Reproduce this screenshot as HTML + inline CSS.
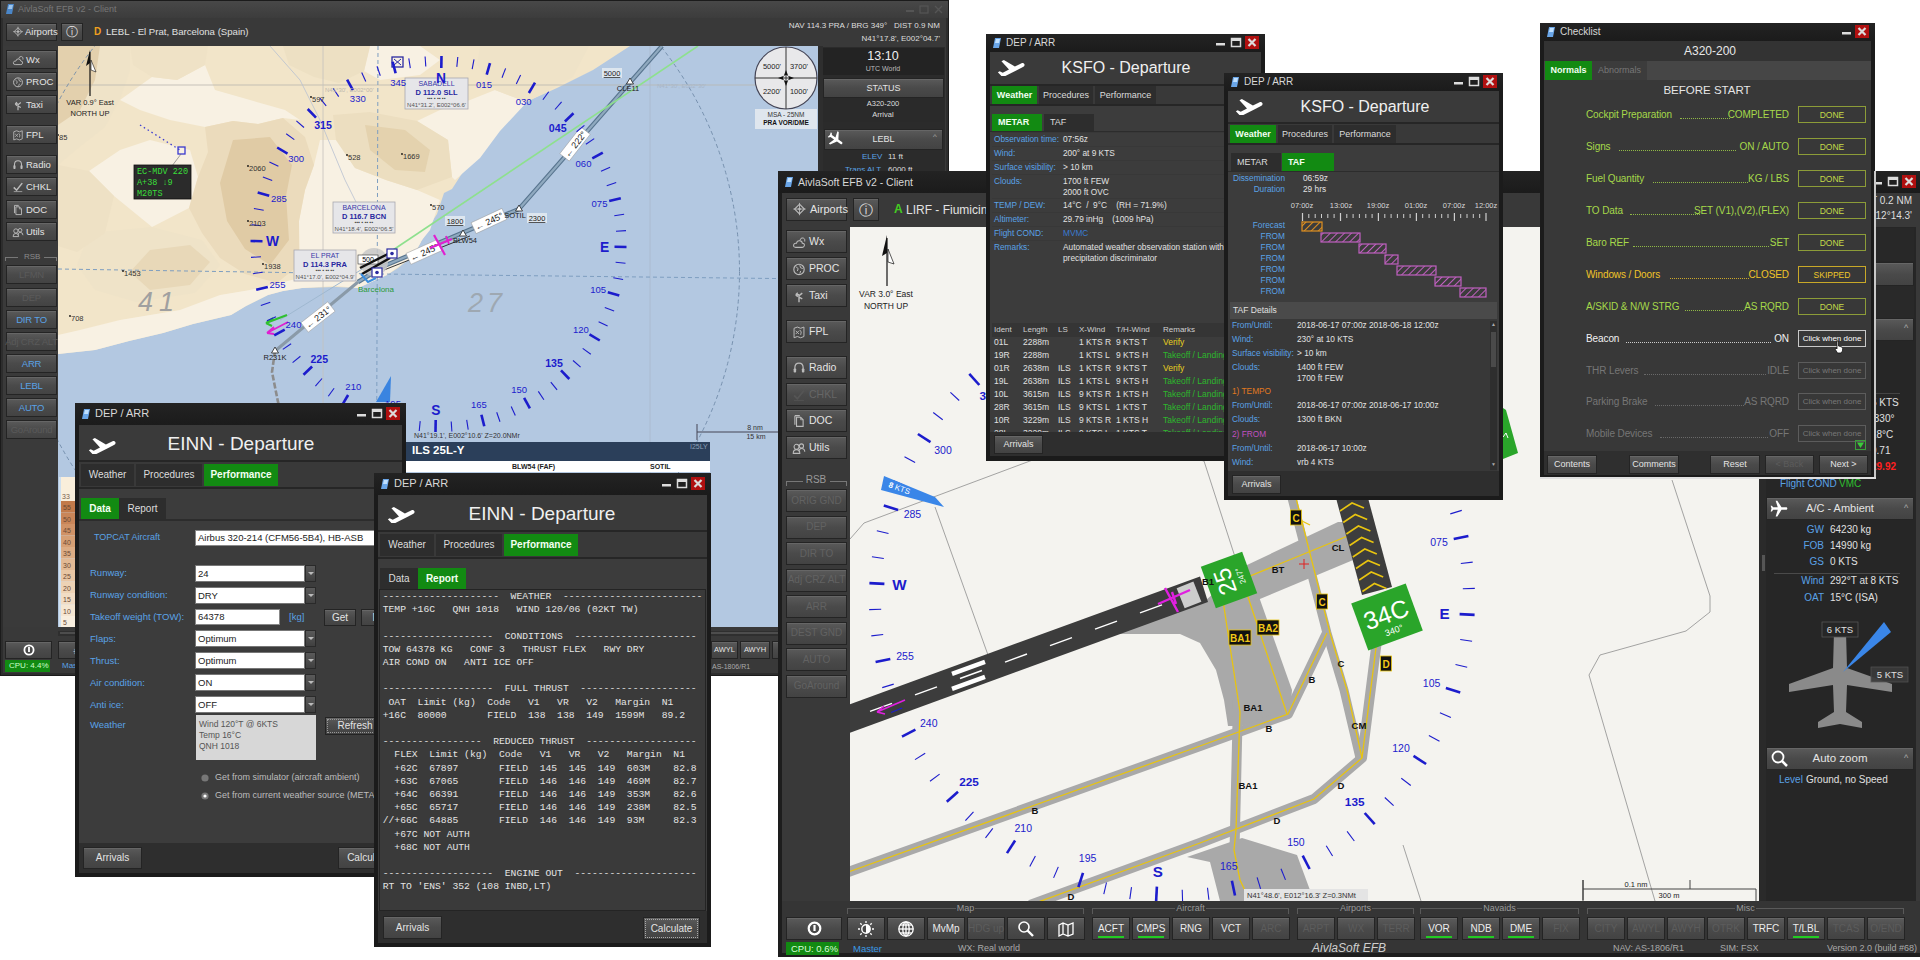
<!DOCTYPE html>
<html><head><meta charset="utf-8">
<style>
*{margin:0;padding:0;box-sizing:border-box}
html,body{width:1920px;height:960px;overflow:hidden}
body{background:#fff;position:relative;font-family:"Liberation Sans",sans-serif;color:#e6e6e6;font-size:10px}
.a{position:absolute}
.win{position:absolute;overflow:hidden}
.t{position:absolute;white-space:nowrap;line-height:1}
.btn{position:absolute;background:linear-gradient(#5a5a5a,#4a4a4a 50%,#434343);border:1px solid #242424;box-shadow:inset 0 1px 0 #666;color:#e4e4e4;font-size:10px;display:flex;align-items:center;justify-content:center;white-space:nowrap;line-height:1}
.btn.dim{color:#5a5a5a}
.btn.bl{color:#5aa2e6}
.blu{color:#5aa2e6}
.tab{position:absolute;background:#2d2d2d;color:#dcdcdc;display:flex;align-items:center;justify-content:center;font-size:10px;white-space:nowrap;line-height:1}
.tab.on{background:#128a12;color:#f2fff2;font-weight:bold}
.mono{font-family:"Liberation Mono",monospace}
.sv{position:absolute;left:0;top:0}
</style></head><body>
<div class="win" style="left:0;top:0;width:949px;height:676px;background:#2d2d2d;box-shadow:inset 0 0 0 1px #1b1b1b"><div class="a" style="left:1px;top:1px;width:947px;height:17px;background:linear-gradient(#484848,#3c3c3c);"></div><svg class="a" style="left:5px;top:3px" width="10" height="12" viewBox="0 0 10 12"><path d="M3 1 L9 1 L7 11 L1 11 Z" fill="#4a86c8"/><path d="M4 2 L8 2 L7 6 L3 6Z" fill="#9cc4ec"/></svg><div class="t" style="left:18px;top:4.5px;font-size:9px;color:#777;">AivlaSoft EFB v2 - Client</div><svg class="a" style="left:905px;top:4px" width="40" height="11"><rect x="1" y="6" width="8" height="2" fill="#555"/><rect x="15" y="2" width="8" height="7" fill="none" stroke="#555" stroke-width="1.2"/><path d="M30 2 L37 9 M37 2 L30 9" stroke="#555" stroke-width="1.4"/></svg><div class="a" style="left:3px;top:18px;width:943px;height:655px;background:#393939;"></div><div class="btn " style="left:6px;top:23px;width:51px;height:18px;font-size:9.5px;"><svg style="position:absolute;left:5px;top:50%;margin-top:-6.0px" width="12" height="12" viewBox="0 0 16 17"><path d="M8 1 L8 15 M1 8 L15 8" stroke="#bbb" stroke-width="1"/><path d="M8 2.5 L13.5 8 L8 13.5 L2.5 8 Z" fill="none" stroke="#bbb" stroke-width="1.3"/><circle cx="8" cy="8" r="1.5" fill="#bbb"/></svg><span style="position:absolute;left:18px">Airports</span></div><div class="btn " style="left:61px;top:23px;width:22px;height:18px;font-size:12px;">ⓘ</div><div class="t" style="left:94px;top:26.5px;font-size:10px;color:#f0a020;font-weight:bold;">D</div><div class="t" style="left:106px;top:27.2px;font-size:9.6px;color:#e0e0e0;">LEBL - El Prat, Barcelona (Spain)</div><div class="t" style="left:540px;width:400px;text-align:right;top:21.6px;font-size:8px;color:#dedede;">NAV 114.3 PRA / BRG 349°&nbsp;&nbsp; DIST 0.9 NM</div><div class="t" style="left:540px;width:400px;text-align:right;top:34.6px;font-size:8px;color:#dedede;">N41°17.8', E002°04.7'</div><div class="a" style="left:3px;top:46px;width:55px;height:581px;background:#3a3a3a;"></div><div class="btn " style="left:6px;top:50px;width:51px;height:19px;font-size:9.5px;justify-content:flex-start"><svg style="position:absolute;left:5px;top:50%;margin-top:-6.0px" width="12" height="12" viewBox="0 0 16 17"><path d="M4 15 Q1 15 1.5 12 Q2 9.5 5 10 Q5.5 6.5 9 7 Q12 7.5 12 10 Q15 10 14.5 13 Q14 15 12 15 Z" fill="none" stroke="#bbb" stroke-width="1.3"/><path d="M9 6.5 Q10 3 13 3.5 Q16 4.5 15 8" fill="none" stroke="#bbb" stroke-width="1.2"/></svg><span style="position:absolute;left:19px">Wx</span></div><div class="btn " style="left:6px;top:72px;width:51px;height:19px;font-size:9.5px;justify-content:flex-start"><svg style="position:absolute;left:5px;top:50%;margin-top:-6.0px" width="12" height="12" viewBox="0 0 16 17"><circle cx="8" cy="9" r="6.3" fill="none" stroke="#bbb" stroke-width="1.4"/><path d="M4.5 6 L7 8 L6 11 M9 4 L10 7 L12.5 8 M9 14 L10 11" fill="none" stroke="#bbb" stroke-width="1.2"/></svg><span style="position:absolute;left:19px">PROC</span></div><div class="btn " style="left:6px;top:95px;width:51px;height:19px;font-size:9.5px;justify-content:flex-start"><svg style="position:absolute;left:5px;top:50%;margin-top:-6.0px" width="12" height="12" viewBox="0 0 16 17"><path d="M8 16 L8 7 M8 7 L4 7 M4 7 L6.5 4.5 M4 7 L6.5 9.5 M8 8 L12 5 M8 10 L12 12" fill="none" stroke="#bbb" stroke-width="1.7"/></svg><span style="position:absolute;left:19px">Taxi</span></div><div class="btn " style="left:6px;top:125px;width:51px;height:19px;font-size:9.5px;justify-content:flex-start"><svg style="position:absolute;left:5px;top:50%;margin-top:-6.0px" width="12" height="12" viewBox="0 0 16 17"><path d="M2 4 L6 2.5 L10 4 L14 2.5 L14 14 L10 15.5 L6 14 L2 15.5 Z" fill="none" stroke="#bbb" stroke-width="1.2"/><path d="M4 7 L8 11 M8 7 L4 11 M9 6 Q12 8 10 12" fill="none" stroke="#bbb" stroke-width="1.1"/></svg><span style="position:absolute;left:19px">FPL</span></div><div class="btn " style="left:6px;top:155px;width:51px;height:19px;font-size:9.5px;justify-content:flex-start"><svg style="position:absolute;left:5px;top:50%;margin-top:-6.0px" width="12" height="12" viewBox="0 0 16 17"><path d="M3 11 L3 8 Q3 2.5 8 2.5 Q13 2.5 13 8 L13 11" fill="none" stroke="#bbb" stroke-width="1.5"/><rect x="1.5" y="9" width="3" height="5" rx="1" fill="#bbb"/><rect x="11.5" y="9" width="3" height="5" rx="1" fill="#bbb"/></svg><span style="position:absolute;left:19px">Radio</span></div><div class="btn " style="left:6px;top:177px;width:51px;height:19px;font-size:9.5px;justify-content:flex-start"><svg style="position:absolute;left:5px;top:50%;margin-top:-6.0px" width="12" height="12" viewBox="0 0 16 17"><path d="M2 9 L6 13 L14 3" fill="none" stroke="#bbb" stroke-width="2.2"/><path d="M2 15 L14 15" stroke="#bbb" stroke-width="1"/></svg><span style="position:absolute;left:19px">CHKL</span></div><div class="btn " style="left:6px;top:200px;width:51px;height:19px;font-size:9.5px;justify-content:flex-start"><svg style="position:absolute;left:5px;top:50%;margin-top:-6.0px" width="12" height="12" viewBox="0 0 16 17"><path d="M5 4 L10 4 L13 7 L13 15 L5 15 Z M3 2 L9 2 M3 2 L3 13" fill="none" stroke="#bbb" stroke-width="1.3"/><path d="M10 4 L10 7 L13 7" fill="none" stroke="#bbb" stroke-width="1"/></svg><span style="position:absolute;left:19px">DOC</span></div><div class="btn " style="left:6px;top:222px;width:51px;height:19px;font-size:9.5px;justify-content:flex-start"><svg style="position:absolute;left:5px;top:50%;margin-top:-6.0px" width="12" height="12" viewBox="0 0 16 17"><circle cx="5" cy="7" r="3" fill="none" stroke="#bbb" stroke-width="1.3"/><circle cx="11" cy="6" r="2.5" fill="none" stroke="#bbb" stroke-width="1.3"/><path d="M1 15 Q1 10.5 5 10.5 Q9 10.5 9 15 Z M8 13 Q8 9 11 9 Q15 9 15 13" fill="none" stroke="#bbb" stroke-width="1.3"/></svg><span style="position:absolute;left:19px">Utils</span></div><div class="btn dim" style="left:6px;top:265px;width:51px;height:19px;font-size:9.5px;letter-spacing:-0.2px">LFMN</div><div class="btn dim" style="left:6px;top:288px;width:51px;height:19px;font-size:9.5px;letter-spacing:-0.2px">DEP</div><div class="btn bl" style="left:6px;top:310px;width:51px;height:19px;font-size:9.5px;letter-spacing:-0.2px">DIR TO</div><div class="btn dim" style="left:6px;top:332px;width:51px;height:19px;font-size:9.5px;letter-spacing:-0.2px">Adj CRZ ALT</div><div class="btn bl" style="left:6px;top:354px;width:51px;height:19px;font-size:9.5px;letter-spacing:-0.2px">ARR</div><div class="btn bl" style="left:6px;top:376px;width:51px;height:19px;font-size:9.5px;letter-spacing:-0.2px">LEBL</div><div class="btn bl" style="left:6px;top:398px;width:51px;height:19px;font-size:9.5px;letter-spacing:-0.2px">AUTO</div><div class="btn dim" style="left:6px;top:420px;width:51px;height:19px;font-size:9.5px;letter-spacing:-0.2px">GoAround</div><div class="a" style="left:5px;top:257px;width:13px;height:1px;background:#777;"></div><div class="a" style="left:5px;top:257px;width:1px;height:4px;background:#777;"></div><div class="a" style="left:44px;top:257px;width:13px;height:1px;background:#777;"></div><div class="a" style="left:56px;top:257px;width:1px;height:4px;background:#777;"></div><div class="t" style="left:24px;top:252.6px;font-size:8px;color:#8a8a8a;">RSB</div><svg class="sv" style="left:58px;top:46px" width="760" height="581" viewBox="58 46 760 581" font-family="Liberation Sans, sans-serif"><rect x="58" y="46" width="760" height="581" fill="#b3c8e1"/><polygon points="58,46 58,354 95,350 129,341 163,333 193,324 231,315 246,306 268,295 283,291 302,288 336,287 358,288 387,275 398,268 413,256 421,242 430,225 437,214 444,193 452,189 461,175 471,160 493,131 517,106 557,88 593,70 630,46 58,46" fill="#f2e5c9"/><polygon points="58,165 58,46 62,46 58,60" fill="#f8f1e3"/><polygon points="152,77 177,80 205,65 215,90 250,100 285,110 300,120 283,118 258,124 233,121 205,127 170,120 140,110 120,100" fill="#f8f1e3"/><polygon points="336,140 355,168 386,180 417,190 440,200 430,230 410,255 380,262 350,270 320,270 300,265 299,221 305,190 314,165 320,140" fill="#f8f1e3"/><polygon points="452,177 448,140 417,121 440,110 470,100 495,90 527,102 500,131 480,158 455,180" fill="#f8f1e3"/><polygon points="58,354 95,350 129,341 163,333 193,324 231,315 246,306 268,295 283,291 302,288 336,286 358,288 387,275 413,256 421,242 390,250 330,270 300,278 250,290 220,295 180,310 120,320 80,330 58,335" fill="#f8f1e3"/><polygon points="89,171 120,150 150,140 190,150 198,177 189,208 152,227 114,196" fill="#f8f1e3"/><polygon points="370,46 420,46 440,60 420,75 380,80 364,71" fill="#f8f1e3"/><polygon points="58,46 130,46 130,71 120,99 105,127 77,149 58,165" fill="#efe3c8"/><polygon points="58,46 100,46 95,80 80,110 58,125" fill="#e3d0ad"/><polygon points="130,46 208,46 205,65 177,80 152,77 133,65" fill="#efe2c6"/><polygon points="205,127 233,121 258,124 283,118 305,137 314,165 305,190 299,221 299,265 277,283 245,274 220,258 202,233 189,208 198,177 208,152" fill="#ebdbbc"/><polygon points="233,140 270,137 292,165 286,196 289,240 270,265 245,249 227,221 220,183" fill="#e0cba5"/><polygon points="283,46 370,46 364,71 339,83 314,77 289,65" fill="#ede0c3"/><polygon points="333,115 370,112 417,121 448,140 452,177 417,190 386,180 355,168 336,140" fill="#ecdec0"/><polygon points="365,125 405,130 430,150 425,172 395,170 370,150" fill="#e4d2ae"/><polygon points="480,46 589,46 573,77 527,102 495,90 477,65" fill="#efe3c8"/><polygon points="89,233 152,227 202,240 220,265 195,293 136,302 95,290 77,265" fill="#efe3c8"/><polygon points="58,165 89,171 114,196 105,233 77,252 58,246" fill="#eee1c5"/><polygon points="150,250 190,245 210,262 190,285 150,290 130,272" fill="#e8d8b8"/><line x1="58" y1="85" x2="818" y2="85" stroke="#b9b6ae" stroke-width="0.8"/><line x1="323" y1="46" x2="323" y2="627" stroke="#c4c2bc" stroke-width="0.8"/><line x1="650" y1="46" x2="650" y2="627" stroke="#a9b8cc" stroke-width="0.8"/><line x1="58" y1="269" x2="380" y2="274" stroke="#7e9ec0" stroke-width="1" stroke-dasharray="4,3"/><line x1="380" y1="274" x2="818" y2="279" stroke="#7e9ec0" stroke-width="1" stroke-dasharray="4,3"/><line x1="378" y1="46" x2="376" y2="627" stroke="#7e9ec0" stroke-width="1" stroke-dasharray="4,3"/><circle cx="377.7" cy="271.6" r="361.8" fill="none" stroke="#6f8aa8" stroke-width="0.9" stroke-dasharray="4,3"/><polyline points="270,46 300,80 320,120 345,180 370,230" fill="none" stroke="#b8c0d0" stroke-width="0.8"/><polyline points="662,46 519,209 384,266 358,282" fill="none" stroke="#58758f" stroke-width="4.5"/><polyline points="662,46 519,209 384,266 358,282" fill="none" stroke="#8fa9bf" stroke-width="2.2"/><polyline points="358,282 275,351" fill="none" stroke="#8a9aa8" stroke-width="3"/><polyline points="275,351 272,372 278,402 290,440" fill="none" stroke="#8c8c8c" stroke-width="2.6" stroke-dasharray="6,2"/><line x1="384" y1="270" x2="470" y2="236" stroke="#222" stroke-width="0.9"/><line x1="698" y1="46" x2="393" y2="250" stroke="#8ee08e" stroke-width="1.6"/><line x1="393" y1="250" x2="280" y2="320" stroke="#9fb8d0" stroke-width="1"/><circle cx="374" cy="262" r="14" fill="#c8c8c8" opacity="0.85"/><rect x="358" y="255" width="20" height="9" fill="#fff" stroke="#333" stroke-width="0.6"/><text x="368" y="262" font-size="7" fill="#000" text-anchor="middle">500</text><line x1="360" y1="268" x2="388" y2="254" stroke="#111" stroke-width="2.5"/><line x1="362" y1="274" x2="390" y2="258" stroke="#111" stroke-width="2.5"/><rect x="387" y="249" width="10" height="9" fill="#fff" stroke="#2a2aa0" stroke-width="1.2"/><circle cx="392" cy="253.5" r="1.8" fill="#2a2aa0"/><rect x="372" y="268" width="10" height="9" fill="#fff" stroke="#2a2aa0" stroke-width="1.2"/><circle cx="377" cy="272.5" r="1.8" fill="#2a2aa0"/><path d="M361 274 L368 282 L376 278" fill="none" stroke="#3a8ee0" stroke-width="2"/><text x="376" y="292" font-size="8" fill="#2a9a3a" text-anchor="middle">Barcelona</text><g transform="translate(575,144) rotate(-52)"><rect x="-17.0" y="-6" width="34" height="12" fill="#fff" stroke="#999" stroke-width="0.5"/><text x="0" y="3.5" font-size="9" fill="#222" text-anchor="middle">← 222°</text></g><g transform="translate(489,221) rotate(-25)"><rect x="-17.0" y="-6" width="34" height="12" fill="#fff" stroke="#999" stroke-width="0.5"/><text x="0" y="3.5" font-size="9" fill="#222" text-anchor="middle">← 245°</text></g><g transform="translate(424,252) rotate(-24)"><rect x="-17.0" y="-6" width="34" height="12" fill="#fff" stroke="#999" stroke-width="0.5"/><text x="0" y="3.5" font-size="9" fill="#222" text-anchor="middle">← 245°</text></g><g transform="translate(318,317) rotate(-38)"><rect x="-17.0" y="-6" width="34" height="12" fill="#fff" stroke="#999" stroke-width="0.5"/><text x="0" y="3.5" font-size="9" fill="#222" text-anchor="middle">← 231°</text></g><line x1="434" y1="235" x2="445" y2="255" stroke="#e020d0" stroke-width="2.2"/><line x1="430" y1="248" x2="452" y2="239" stroke="#e020d0" stroke-width="2.2"/><line x1="446" y1="236" x2="449" y2="244" stroke="#e020d0" stroke-width="2"/><path d="M630 78 L633.5 84 L626.5 84 Z" fill="#fff" stroke="#222" stroke-width="0.8"/><text x="628" y="91" font-size="7.5" fill="#222" text-anchor="middle">CLE11</text><path d="M519 205 L522.5 211 L515.5 211 Z" fill="#fff" stroke="#222" stroke-width="0.8"/><text x="515" y="218" font-size="7.5" fill="#222" text-anchor="middle">SOTIL</text><path d="M463 230 L466.5 236 L459.5 236 Z" fill="#fff" stroke="#222" stroke-width="0.8"/><text x="465" y="243" font-size="7.5" fill="#222" text-anchor="middle">BLW54</text><path d="M275 347 L278.5 353 L271.5 353 Z" fill="#fff" stroke="#222" stroke-width="0.8"/><text x="275" y="360" font-size="7.5" fill="#222" text-anchor="middle">R231K</text><rect x="602" y="68" width="20" height="10" fill="#dde6ef"/><text x="612" y="76" font-size="7.5" fill="#222" text-anchor="middle" text-decoration="underline">5000</text><rect x="527" y="213" width="20" height="10" fill="#dde6ef"/><text x="537" y="221" font-size="7.5" fill="#222" text-anchor="middle" text-decoration="underline">2300</text><rect x="445" y="216" width="20" height="10" fill="#dde6ef"/><text x="455" y="224" font-size="7.5" fill="#222" text-anchor="middle" text-decoration="underline">1800</text><path d="M287 315 L266 323 M266 323 L273 318 M266 323 L272 326" stroke="#30c030" stroke-width="2" fill="none"/><path d="M288 322 L267 333 M267 333 L274 327 M267 333 L274 334" stroke="#e020d0" stroke-width="1.8" fill="none"/><path d="M391 376 L376 402 L390 402 Z" fill="#3a84e0"/><rect x="405" y="78" width="63" height="31" fill="#e6e6e9" stroke="#a8a8b0" stroke-width="0.8"/><text x="436.5" y="86" font-size="7" fill="#3838a8" text-anchor="middle">SABADELL</text><text x="436.5" y="95" font-size="7.5" font-weight="bold" fill="#2828a0" text-anchor="middle">D 112.0 SLL</text><text x="436.5" y="100" font-size="5" fill="#444" text-anchor="middle">▪▪▪  ▪ ▪▪  ▪▪</text><text x="436.5" y="107" font-size="6" fill="#555" text-anchor="middle">N41°31.2', E002°06.6'</text><rect x="333" y="202" width="62" height="31" fill="#e6e6e9" stroke="#a8a8b0" stroke-width="0.8"/><text x="364.0" y="210" font-size="7" fill="#3838a8" text-anchor="middle">BARCELONA</text><text x="364.0" y="219" font-size="7.5" font-weight="bold" fill="#2828a0" text-anchor="middle">D 116.7 BCN</text><text x="364.0" y="224" font-size="5" fill="#444" text-anchor="middle">▪▪▪  ▪ ▪▪  ▪▪</text><text x="364.0" y="231" font-size="6" fill="#555" text-anchor="middle">N41°18.4', E002°06.5'</text><rect x="294" y="250" width="62" height="31" fill="#e6e6e9" stroke="#a8a8b0" stroke-width="0.8"/><text x="325.0" y="258" font-size="7" fill="#3838a8" text-anchor="middle">EL PRAT</text><text x="325.0" y="267" font-size="7.5" font-weight="bold" fill="#2828a0" text-anchor="middle">D 114.3 PRA</text><text x="325.0" y="272" font-size="5" fill="#444" text-anchor="middle">▪▪▪  ▪ ▪▪  ▪▪</text><text x="325.0" y="279" font-size="6" fill="#555" text-anchor="middle">N41°17.0', E002°04.9'</text><rect x="392" y="57" width="11" height="10" fill="none" stroke="#2a2aa0" stroke-width="1.3"/><path d="M394 59 L401 65 M401 59 L394 65" stroke="#2a2aa0" stroke-width="1"/><line x1="441.3" y1="68.0" x2="441.5" y2="56.0" stroke="#1c1ccc" stroke-width="2.6"/><text x="441.1" y="83.0" font-size="13.8" font-weight="bold" fill="#1c1ccc" text-anchor="middle">N</text><line x1="456.8" y1="66.9" x2="457.8" y2="57.0" stroke="#1c1ccc" stroke-width="1.1"/><line x1="472.2" y1="69.2" x2="474.0" y2="59.4" stroke="#1c1ccc" stroke-width="1.1"/><line x1="486.7" y1="74.7" x2="490.0" y2="63.2" stroke="#1c1ccc" stroke-width="2.6"/><text x="484.0" y="87.8" font-size="9.5" font-weight="normal" fill="#1c1ccc" text-anchor="middle">015</text><line x1="502.0" y1="77.7" x2="505.6" y2="68.4" stroke="#1c1ccc" stroke-width="1.1"/><line x1="516.3" y1="83.9" x2="520.6" y2="74.9" stroke="#1c1ccc" stroke-width="1.1"/><line x1="528.9" y1="93.0" x2="535.0" y2="82.7" stroke="#1c1ccc" stroke-width="2.6"/><text x="523.7" y="105.0" font-size="9.5" font-weight="normal" fill="#1c1ccc" text-anchor="middle">030</text><line x1="542.9" y1="99.8" x2="548.7" y2="91.7" stroke="#1c1ccc" stroke-width="1.1"/><line x1="555.0" y1="109.5" x2="561.6" y2="101.9" stroke="#1c1ccc" stroke-width="1.1"/><line x1="564.9" y1="121.5" x2="573.5" y2="113.2" stroke="#1c1ccc" stroke-width="2.6"/><text x="557.7" y="132.3" font-size="10.6" font-weight="bold" fill="#1c1ccc" text-anchor="middle">045</text><line x1="576.6" y1="131.7" x2="584.4" y2="125.4" stroke="#1c1ccc" stroke-width="1.1"/><line x1="585.9" y1="144.2" x2="594.2" y2="138.6" stroke="#1c1ccc" stroke-width="1.1"/><line x1="592.3" y1="158.4" x2="602.8" y2="152.6" stroke="#1c1ccc" stroke-width="2.6"/><text x="583.5" y="166.7" font-size="9.5" font-weight="normal" fill="#1c1ccc" text-anchor="middle">060</text><line x1="601.0" y1="171.3" x2="610.1" y2="167.2" stroke="#1c1ccc" stroke-width="1.1"/><line x1="606.7" y1="185.8" x2="616.2" y2="182.5" stroke="#1c1ccc" stroke-width="1.1"/><line x1="609.2" y1="201.1" x2="620.8" y2="198.2" stroke="#1c1ccc" stroke-width="2.6"/><text x="599.5" y="207.0" font-size="9.5" font-weight="normal" fill="#1c1ccc" text-anchor="middle">075</text><line x1="614.3" y1="215.8" x2="624.1" y2="214.3" stroke="#1c1ccc" stroke-width="1.1"/><line x1="616.0" y1="231.3" x2="626.0" y2="230.6" stroke="#1c1ccc" stroke-width="1.1"/><line x1="614.5" y1="246.8" x2="626.5" y2="247.0" stroke="#1c1ccc" stroke-width="2.6"/><text x="604.5" y="251.6" font-size="13.8" font-weight="bold" fill="#1c1ccc" text-anchor="middle">E</text><line x1="615.6" y1="262.3" x2="625.5" y2="263.3" stroke="#1c1ccc" stroke-width="1.1"/><line x1="613.3" y1="277.7" x2="623.1" y2="279.5" stroke="#1c1ccc" stroke-width="1.1"/><line x1="607.8" y1="292.2" x2="619.3" y2="295.5" stroke="#1c1ccc" stroke-width="2.6"/><text x="598.1" y="292.9" font-size="9.5" font-weight="normal" fill="#1c1ccc" text-anchor="middle">105</text><line x1="604.8" y1="307.5" x2="614.1" y2="311.1" stroke="#1c1ccc" stroke-width="1.1"/><line x1="598.6" y1="321.8" x2="607.6" y2="326.1" stroke="#1c1ccc" stroke-width="1.1"/><line x1="589.5" y1="334.4" x2="599.8" y2="340.5" stroke="#1c1ccc" stroke-width="2.6"/><text x="580.9" y="332.7" font-size="9.5" font-weight="normal" fill="#1c1ccc" text-anchor="middle">120</text><line x1="582.7" y1="348.4" x2="590.8" y2="354.2" stroke="#1c1ccc" stroke-width="1.1"/><line x1="573.0" y1="360.5" x2="580.6" y2="367.1" stroke="#1c1ccc" stroke-width="1.1"/><line x1="561.0" y1="370.4" x2="569.3" y2="379.0" stroke="#1c1ccc" stroke-width="2.6"/><text x="554.0" y="367.0" font-size="10.6" font-weight="bold" fill="#1c1ccc" text-anchor="middle">135</text><line x1="550.8" y1="382.1" x2="557.1" y2="389.9" stroke="#1c1ccc" stroke-width="1.1"/><line x1="538.3" y1="391.4" x2="543.9" y2="399.7" stroke="#1c1ccc" stroke-width="1.1"/><line x1="524.1" y1="397.8" x2="529.9" y2="408.3" stroke="#1c1ccc" stroke-width="2.6"/><text x="519.2" y="392.5" font-size="9.5" font-weight="normal" fill="#1c1ccc" text-anchor="middle">150</text><line x1="511.2" y1="406.5" x2="515.3" y2="415.6" stroke="#1c1ccc" stroke-width="1.1"/><line x1="496.7" y1="412.2" x2="500.0" y2="421.7" stroke="#1c1ccc" stroke-width="1.1"/><line x1="481.4" y1="414.7" x2="484.3" y2="426.3" stroke="#1c1ccc" stroke-width="2.6"/><text x="478.9" y="408.4" font-size="9.5" font-weight="normal" fill="#1c1ccc" text-anchor="middle">165</text><line x1="466.7" y1="419.8" x2="468.2" y2="429.6" stroke="#1c1ccc" stroke-width="1.1"/><line x1="451.2" y1="421.5" x2="451.9" y2="431.5" stroke="#1c1ccc" stroke-width="1.1"/><line x1="435.7" y1="420.0" x2="435.5" y2="432.0" stroke="#1c1ccc" stroke-width="2.6"/><text x="435.9" y="414.9" font-size="13.8" font-weight="bold" fill="#1c1ccc" text-anchor="middle">S</text><line x1="420.2" y1="421.1" x2="419.2" y2="431.0" stroke="#1c1ccc" stroke-width="1.1"/><line x1="404.8" y1="418.8" x2="403.0" y2="428.6" stroke="#1c1ccc" stroke-width="1.1"/><line x1="390.3" y1="413.3" x2="387.0" y2="424.8" stroke="#1c1ccc" stroke-width="2.6"/><text x="393.0" y="407.1" font-size="9.5" font-weight="normal" fill="#1c1ccc" text-anchor="middle">195</text><line x1="375.0" y1="410.3" x2="371.4" y2="419.6" stroke="#1c1ccc" stroke-width="1.1"/><line x1="360.7" y1="404.1" x2="356.4" y2="413.1" stroke="#1c1ccc" stroke-width="1.1"/><line x1="348.1" y1="395.0" x2="342.0" y2="405.3" stroke="#1c1ccc" stroke-width="2.6"/><text x="353.3" y="389.9" font-size="9.5" font-weight="normal" fill="#1c1ccc" text-anchor="middle">210</text><line x1="334.1" y1="388.2" x2="328.3" y2="396.3" stroke="#1c1ccc" stroke-width="1.1"/><line x1="322.0" y1="378.5" x2="315.4" y2="386.1" stroke="#1c1ccc" stroke-width="1.1"/><line x1="312.1" y1="366.5" x2="303.5" y2="374.8" stroke="#1c1ccc" stroke-width="2.6"/><text x="319.3" y="363.4" font-size="10.6" font-weight="bold" fill="#1c1ccc" text-anchor="middle">225</text><line x1="300.4" y1="356.3" x2="292.6" y2="362.6" stroke="#1c1ccc" stroke-width="1.1"/><line x1="291.1" y1="343.8" x2="282.8" y2="349.4" stroke="#1c1ccc" stroke-width="1.1"/><line x1="284.7" y1="329.6" x2="274.2" y2="335.4" stroke="#1c1ccc" stroke-width="2.6"/><text x="293.5" y="328.2" font-size="9.5" font-weight="normal" fill="#1c1ccc" text-anchor="middle">240</text><line x1="276.0" y1="316.7" x2="266.9" y2="320.8" stroke="#1c1ccc" stroke-width="1.1"/><line x1="270.3" y1="302.2" x2="260.8" y2="305.5" stroke="#1c1ccc" stroke-width="1.1"/><line x1="267.8" y1="286.9" x2="256.2" y2="289.8" stroke="#1c1ccc" stroke-width="2.6"/><text x="277.5" y="287.9" font-size="9.5" font-weight="normal" fill="#1c1ccc" text-anchor="middle">255</text><line x1="262.7" y1="272.2" x2="252.9" y2="273.7" stroke="#1c1ccc" stroke-width="1.1"/><line x1="261.0" y1="256.7" x2="251.0" y2="257.4" stroke="#1c1ccc" stroke-width="1.1"/><line x1="262.5" y1="241.2" x2="250.5" y2="241.0" stroke="#1c1ccc" stroke-width="2.6"/><text x="272.5" y="246.4" font-size="13.8" font-weight="bold" fill="#1c1ccc" text-anchor="middle">W</text><line x1="261.4" y1="225.7" x2="251.5" y2="224.7" stroke="#1c1ccc" stroke-width="1.1"/><line x1="263.7" y1="210.3" x2="253.9" y2="208.5" stroke="#1c1ccc" stroke-width="1.1"/><line x1="269.2" y1="195.8" x2="257.7" y2="192.5" stroke="#1c1ccc" stroke-width="2.6"/><text x="278.9" y="201.9" font-size="9.5" font-weight="normal" fill="#1c1ccc" text-anchor="middle">285</text><line x1="272.2" y1="180.5" x2="262.9" y2="176.9" stroke="#1c1ccc" stroke-width="1.1"/><line x1="278.4" y1="166.2" x2="269.4" y2="161.9" stroke="#1c1ccc" stroke-width="1.1"/><line x1="287.5" y1="153.6" x2="277.2" y2="147.5" stroke="#1c1ccc" stroke-width="2.6"/><text x="296.1" y="162.2" font-size="9.5" font-weight="normal" fill="#1c1ccc" text-anchor="middle">300</text><line x1="294.3" y1="139.6" x2="286.2" y2="133.8" stroke="#1c1ccc" stroke-width="1.1"/><line x1="304.0" y1="127.5" x2="296.4" y2="120.9" stroke="#1c1ccc" stroke-width="1.1"/><line x1="316.0" y1="117.6" x2="307.7" y2="109.0" stroke="#1c1ccc" stroke-width="2.6"/><text x="323.0" y="128.6" font-size="10.6" font-weight="bold" fill="#1c1ccc" text-anchor="middle">315</text><line x1="326.2" y1="105.9" x2="319.9" y2="98.1" stroke="#1c1ccc" stroke-width="1.1"/><line x1="338.7" y1="96.6" x2="333.1" y2="88.3" stroke="#1c1ccc" stroke-width="1.1"/><line x1="352.9" y1="90.2" x2="347.1" y2="79.7" stroke="#1c1ccc" stroke-width="2.6"/><text x="357.8" y="102.4" font-size="9.5" font-weight="normal" fill="#1c1ccc" text-anchor="middle">330</text><line x1="365.8" y1="81.5" x2="361.7" y2="72.4" stroke="#1c1ccc" stroke-width="1.1"/><line x1="380.3" y1="75.8" x2="377.0" y2="66.3" stroke="#1c1ccc" stroke-width="1.1"/><line x1="395.6" y1="73.3" x2="392.7" y2="61.7" stroke="#1c1ccc" stroke-width="2.6"/><text x="398.1" y="86.4" font-size="9.5" font-weight="normal" fill="#1c1ccc" text-anchor="middle">345</text><line x1="410.3" y1="68.2" x2="408.8" y2="58.4" stroke="#1c1ccc" stroke-width="1.1"/><line x1="425.8" y1="66.5" x2="425.1" y2="56.5" stroke="#1c1ccc" stroke-width="1.1"/><circle cx="311" cy="97" r="0.9" fill="#111"/><text x="312" y="102" font-size="7.5" fill="#333">597</text><circle cx="347" cy="155" r="0.9" fill="#111"/><text x="348" y="160" font-size="7.5" fill="#333">528</text><circle cx="402" cy="154" r="0.9" fill="#111"/><text x="403" y="159" font-size="7.5" fill="#333">1669</text><circle cx="248" cy="166" r="0.9" fill="#111"/><text x="249" y="171" font-size="7.5" fill="#333">2060</text><circle cx="248" cy="221" r="0.9" fill="#111"/><text x="249" y="226" font-size="7.5" fill="#333">2103</text><circle cx="263" cy="264" r="0.9" fill="#111"/><text x="264" y="269" font-size="7.5" fill="#333">1938</text><circle cx="123" cy="271" r="0.9" fill="#111"/><text x="124" y="276" font-size="7.5" fill="#333">1453</text><circle cx="70" cy="316" r="0.9" fill="#111"/><text x="71" y="321" font-size="7.5" fill="#333">708</text><circle cx="431" cy="205" r="0.9" fill="#111"/><text x="432" y="210" font-size="7.5" fill="#333">570</text><circle cx="58" cy="135" r="0.9" fill="#111"/><text x="59" y="140" font-size="7.5" fill="#333">85</text><text x="138" y="311" font-size="27" fill="#a0a0a0" font-style="italic" letter-spacing="6">41</text><text x="468" y="312" font-size="27" fill="#9ea8b2" font-style="italic" letter-spacing="4">27</text><line x1="90" y1="52" x2="90" y2="96" stroke="#111" stroke-width="1.2"/><path d="M90 50 L86 66 L90 63 Z" fill="#111"/><path d="M91 60 L96 72 L91 70 Z" fill="#fff" stroke="#111" stroke-width="0.6"/><text x="90" y="105" font-size="7.5" fill="#222" text-anchor="middle">VAR 0.9° East</text><text x="90" y="116" font-size="7.5" fill="#222" text-anchor="middle">NORTH UP</text><polyline points="140,125 180,150" stroke="#3a3ad0" stroke-width="1.3" stroke-dasharray="1.5,3" fill="none"/><rect x="178" y="147" width="7" height="7" fill="none" stroke="#3a3ad0" stroke-width="1.3"/><line x1="181" y1="154" x2="172" y2="166" stroke="#666" stroke-width="0.6"/><rect x="134" y="165" width="57" height="34" fill="#2b2b2b" stroke="#111" stroke-width="0.8"/><text x="137" y="174" font-size="8.5" fill="#3adf3a" font-family="Liberation Mono, monospace">EC-MDV 220</text><text x="137" y="185" font-size="8.5" fill="#3adf3a" font-family="Liberation Mono, monospace">A+38 ↓9</text><text x="137" y="196" font-size="8.5" fill="#3adf3a" font-family="Liberation Mono, monospace">M20TS</text><text x="414" y="438" font-size="7" fill="#333">N41°19.1', E002°10.6' Z=20.0NMr</text><text x="325" y="92" font-size="6" fill="#bdb8ae">N41°30', E002°00'</text><text x="657" y="88" font-size="6" fill="#a8b6c8">N41°30', E002°30'</text><rect x="755" y="109" width="62" height="20" fill="#dfe6ee"/><circle cx="786" cy="78" r="31" fill="#e8e8ea" stroke="#445" stroke-width="1.2"/><line x1="755" y1="78" x2="817" y2="78" stroke="#333" stroke-width="1"/><line x1="786" y1="47" x2="786" y2="109" stroke="#333" stroke-width="1"/><path d="M786 70 L783 78 L786 86 L789 78 Z M778 78 L786 75 L794 78 L786 81 Z" fill="#111"/><text x="772" y="69" font-size="7.5" fill="#222" text-anchor="middle">5000'</text><text x="799" y="69" font-size="7.5" fill="#222" text-anchor="middle">3700'</text><text x="772" y="94" font-size="7.5" fill="#222" text-anchor="middle">2200'</text><text x="799" y="94" font-size="7.5" fill="#222" text-anchor="middle">1000'</text><text x="786" y="117" font-size="6.5" fill="#333" text-anchor="middle">MSA - 25NM</text><text x="786" y="125" font-size="6.5" font-weight="bold" fill="#111" text-anchor="middle">PRA VOR/DME</text><line x1="697" y1="424" x2="697" y2="440" stroke="#445" stroke-width="1"/><line x1="697" y1="432" x2="818" y2="432" stroke="#445" stroke-width="1"/><text x="755" y="430" font-size="7" fill="#333" text-anchor="middle">8 nm</text><text x="756" y="439" font-size="7" fill="#333" text-anchor="middle">15 km</text><rect x="59" y="477" width="17" height="150" fill="#cfe0f0"/><rect x="61" y="477" width="15" height="24" fill="#f9eedb"/><text x="62" y="499" font-size="7" fill="#7a6050">33</text><rect x="61" y="501" width="15" height="11.5" fill="#c27a4a"/><text x="63" y="510" font-size="7" fill="#6b4a35">55</text><rect x="61" y="512.5" width="15" height="11.5" fill="#c98558"/><text x="63" y="521.5" font-size="7" fill="#6b4a35">50</text><rect x="61" y="524.0" width="15" height="11.5" fill="#d09266"/><text x="63" y="533.0" font-size="7" fill="#6b4a35">45</text><rect x="61" y="535.5" width="15" height="11.5" fill="#d69f74"/><text x="63" y="544.5" font-size="7" fill="#6b4a35">40</text><rect x="61" y="547.0" width="15" height="11.5" fill="#dcac84"/><text x="63" y="556.0" font-size="7" fill="#6b4a35">35</text><rect x="61" y="558.5" width="15" height="11.5" fill="#e2b994"/><text x="63" y="567.5" font-size="7" fill="#6b4a35">30</text><rect x="61" y="570.0" width="15" height="11.5" fill="#e8c6a4"/><text x="63" y="579.0" font-size="7" fill="#6b4a35">25</text><rect x="61" y="581.5" width="15" height="11.5" fill="#edd2b4"/><text x="63" y="590.5" font-size="7" fill="#6b4a35">20</text><rect x="61" y="593.0" width="15" height="11.5" fill="#f1dcc4"/><text x="63" y="602.0" font-size="7" fill="#6b4a35">15</text><rect x="61" y="604.5" width="15" height="11.5" fill="#f5e6d2"/><text x="63" y="613.5" font-size="7" fill="#6b4a35">10</text><rect x="61" y="616.0" width="15" height="11.5" fill="#f8eedf"/><text x="63" y="625.0" font-size="7" fill="#6b4a35">5</text></svg><div class="a" style="left:818px;top:46px;width:5px;height:581px;background:#2e2e2e;"></div><div class="a" style="left:823px;top:47px;width:122px;height:580px;background:#2b2b2b;"></div><div class="a" style="left:823px;top:48px;width:121px;height:27px;background:#232323;"></div><div class="t" style="left:683px;width:400px;text-align:center;top:50.1px;font-size:12.5px;color:#f0f0f0;">13:10</div><div class="t" style="left:683px;width:400px;text-align:center;top:64.7px;font-size:7px;color:#bbb;">UTC World</div><div class="btn " style="left:823px;top:78px;width:121px;height:20px;font-size:9px;">STATUS</div><div class="a" style="left:823px;top:98px;width:121px;height:24px;background:#2a2a2a;"></div><div class="t" style="left:683px;width:400px;text-align:center;top:100.4px;font-size:7.5px;color:#ddd;">A320-200</div><div class="t" style="left:683px;width:400px;text-align:center;top:110.9px;font-size:7.5px;color:#ddd;">Arrival</div><div class="btn " style="left:824px;top:129px;width:119px;height:21px;font-size:9px;">LEBL</div><svg class="a" style="left:826px;top:130px" width="19" height="19" viewBox="0 0 24 24"><path d="M21 16v-2l-8-5V3.5c0-.83-.67-1.5-1.5-1.5S10 2.67 10 3.5V9l-8 5v2l8-2.5V19l-2 1.5V22l3.5-1 3.5 1v-1.5L13 19v-5.5l8 2.5z" fill="#fff" transform="rotate(125 12 12)"/></svg><div class="t" style="left:933px;top:132.6px;font-size:8px;color:#aaa;">^</div><div class="t" style="left:862px;top:152.6px;font-size:8px;color:#5aa2e6;">ELEV</div><div class="t" style="left:888px;top:152.6px;font-size:8px;color:#ddd;">11 ft</div><div class="t" style="left:845px;top:165.6px;font-size:8px;color:#5aa2e6;">Trans ALT</div><div class="t" style="left:888px;top:165.6px;font-size:8px;color:#ddd;">6000 ft</div><div class="a" style="left:405px;top:442px;width:305px;height:19px;background:#2b3f5a;"></div><div class="t" style="left:412px;top:445.2px;font-size:11.5px;color:#fff;font-weight:bold;">ILS 25L-Y</div><div class="t" style="left:690px;top:443.1px;font-size:7px;color:#8da0b8;">I25LY</div><div class="a" style="left:405px;top:461px;width:305px;height:11px;background:#fff;"></div><div class="t" style="left:512px;top:462.6px;font-size:7px;color:#222;font-weight:bold;">BLW54 (FAF)</div><div class="t" style="left:650px;top:462.6px;font-size:7px;color:#222;font-weight:bold;">SOTIL</div><div class="a" style="left:58px;top:631px;width:760px;height:5px;background:#2f2f2f;"></div><div class="a" style="left:60px;top:632px;width:756px;height:2px;background:#4d4d4d;"></div><div class="btn " style="left:5px;top:641px;width:47px;height:18px;font-size:10px;"><svg width="12" height="12"><circle cx="6" cy="6" r="4.6" fill="none" stroke="#fff" stroke-width="1.8"/><line x1="6" y1="3" x2="6" y2="8" stroke="#fff" stroke-width="1.8"/></svg></div><div class="btn " style="left:58px;top:641px;width:37px;height:18px;font-size:11px;">☼</div><div class="btn " style="left:711px;top:641px;width:27px;height:18px;font-size:7.5px;">AWYL</div><div class="btn " style="left:740px;top:641px;width:30px;height:18px;font-size:7.5px;">AWYH</div><div class="btn " style="left:772px;top:641px;width:10px;height:18px;font-size:10px;"></div><div class="a" style="left:5px;top:660px;width:45px;height:12px;background:#128a12;"></div><div class="t" style="left:9px;top:661.6px;font-size:8px;color:#cfc;">CPU: 4.4%</div><div class="t" style="left:62px;top:661.6px;font-size:8px;color:#5aa2e6;">Master</div><div class="t" style="left:712px;top:663.1px;font-size:7px;color:#aaa;">AS-1806/R1</div></div><div class="win" style="left:75px;top:403px;width:331px;height:474px;background:#1b1b1b"><div class="a" style="left:0px;top:0px;width:331px;height:22px;background:linear-gradient(#232323,#1b1b1b);"></div><svg class="a" style="left:6px;top:5px" width="10" height="12" viewBox="0 0 10 12"><path d="M3 1 L9 1 L7 11 L1 11 Z" fill="#6aa6e8"/><path d="M4 2 L8 2 L7 6 L3 6Z" fill="#bfe0ff"/></svg><div class="t" style="left:20px;top:5.4px;font-size:11px;color:#d8d8d8;">DEP / ARR</div><div class="a" style="left:311px;top:4px;width:14px;height:13px;background:#b01010"></div><svg class="a" style="left:311px;top:4px" width="14" height="13"><path d="M3.5 3 L10.5 10 M10.5 3 L3.5 10" stroke="#dcdcdc" stroke-width="2.2"/></svg><svg class="a" style="left:296px;top:5px" width="12" height="11"><rect x="1.5" y="1.5" width="9" height="8" fill="none" stroke="#dcdcdc" stroke-width="1.5"/><rect x="1.5" y="1.5" width="9" height="2.5" fill="#dcdcdc"/></svg><svg class="a" style="left:281px;top:5px" width="11" height="11"><rect x="1" y="6" width="9" height="2.5" fill="#dcdcdc"/></svg><div class="a" style="left:4px;top:22px;width:323px;height:35px;background:#3a3a3a;"></div><svg class="a" style="left:12px;top:31px" width="30" height="20" viewBox="1 2 22 14"><path d="M22.07 9.64c-.21-.8-1.04-1.28-1.84-1.06L14.92 10l-6.9-6.43-1.93.51 4.14 7.17-4.97 1.33-1.97-1.54-1.45.39 1.82 3.16.77 1.33 1.6-.43 5.31-1.42 4.35-1.16L21 11.49c.81-.23 1.28-1.05 1.07-1.85z" fill="#fff" transform="rotate(-12 12 10)"/></svg><div class="t" style="left:-34px;width:400px;text-align:center;top:31.0px;font-size:19px;color:#f0f0f0;">EINN - Departure</div><div class="a" style="left:4px;top:57px;width:323px;height:2px;background:#262626;"></div><div class="a" style="left:4px;top:59px;width:323px;height:26px;background:#393939;"></div><div class="tab" style="left:6px;top:61px;width:53px;height:22px;font-size:10px;">Weather</div><div class="tab" style="left:61px;top:61px;width:66px;height:22px;font-size:10px;">Procedures</div><div class="tab on" style="left:129px;top:61px;width:74px;height:22px;font-size:10px;">Performance</div><div class="a" style="left:4px;top:84px;width:323px;height:2px;background:#262626;"></div><div class="a" style="left:4px;top:86px;width:323px;height:354px;background:#3c3c3c;"></div><div class="tab on" style="left:6px;top:95px;width:38px;height:21px;font-size:10px;">Data</div><div class="tab" style="left:44px;top:95px;width:47px;height:21px;font-size:10px;">Report</div><div class="a" style="left:4px;top:116px;width:323px;height:2px;background:#2c2c2c;"></div><div class="t" style="left:19px;top:130.1px;font-size:9px;color:#5aa2e6;">TOPCAT Aircraft</div><div class="a" style="left:120px;top:127px;width:205px;height:16px;background:#fff;border:1px solid #888"></div><div class="t" style="left:123px;top:130.3px;font-size:9.5px;color:#222;">Airbus 320-214 (CFM56-5B4), HB-ASB</div><div class="t" style="left:15px;top:164.8px;font-size:9.5px;color:#5aa2e6;">Runway:</div><div class="a" style="left:120px;top:162px;width:110px;height:17px;background:#fff;border:1px solid #777"></div><div class="t" style="left:123px;top:165.8px;font-size:9.5px;color:#222;">24</div><div class="a" style="left:230px;top:162px;width:11px;height:17px;background:linear-gradient(#5a5a5a,#404040);border:1px solid #2a2a2a"></div><svg class="a" style="left:233px;top:168.5px" width="6" height="4"><path d="M0 0 L6 0 L3 3Z" fill="#bbb"/></svg><div class="t" style="left:15px;top:186.8px;font-size:9.5px;color:#5aa2e6;">Runway condition:</div><div class="a" style="left:120px;top:184px;width:110px;height:17px;background:#fff;border:1px solid #777"></div><div class="t" style="left:123px;top:187.8px;font-size:9.5px;color:#222;">DRY</div><div class="a" style="left:230px;top:184px;width:11px;height:17px;background:linear-gradient(#5a5a5a,#404040);border:1px solid #2a2a2a"></div><svg class="a" style="left:233px;top:190.5px" width="6" height="4"><path d="M0 0 L6 0 L3 3Z" fill="#bbb"/></svg><div class="t" style="left:15px;top:230.8px;font-size:9.5px;color:#5aa2e6;">Flaps:</div><div class="a" style="left:120px;top:227px;width:110px;height:17px;background:#fff;border:1px solid #777"></div><div class="t" style="left:123px;top:230.8px;font-size:9.5px;color:#222;">Optimum</div><div class="a" style="left:230px;top:227px;width:11px;height:17px;background:linear-gradient(#5a5a5a,#404040);border:1px solid #2a2a2a"></div><svg class="a" style="left:233px;top:233.5px" width="6" height="4"><path d="M0 0 L6 0 L3 3Z" fill="#bbb"/></svg><div class="t" style="left:15px;top:252.8px;font-size:9.5px;color:#5aa2e6;">Thrust:</div><div class="a" style="left:120px;top:249px;width:110px;height:17px;background:#fff;border:1px solid #777"></div><div class="t" style="left:123px;top:252.8px;font-size:9.5px;color:#222;">Optimum</div><div class="a" style="left:230px;top:249px;width:11px;height:17px;background:linear-gradient(#5a5a5a,#404040);border:1px solid #2a2a2a"></div><svg class="a" style="left:233px;top:255.5px" width="6" height="4"><path d="M0 0 L6 0 L3 3Z" fill="#bbb"/></svg><div class="t" style="left:15px;top:274.8px;font-size:9.5px;color:#5aa2e6;">Air condition:</div><div class="a" style="left:120px;top:271px;width:110px;height:17px;background:#fff;border:1px solid #777"></div><div class="t" style="left:123px;top:274.8px;font-size:9.5px;color:#222;">ON</div><div class="a" style="left:230px;top:271px;width:11px;height:17px;background:linear-gradient(#5a5a5a,#404040);border:1px solid #2a2a2a"></div><svg class="a" style="left:233px;top:277.5px" width="6" height="4"><path d="M0 0 L6 0 L3 3Z" fill="#bbb"/></svg><div class="t" style="left:15px;top:296.8px;font-size:9.5px;color:#5aa2e6;">Anti ice:</div><div class="a" style="left:120px;top:293px;width:110px;height:17px;background:#fff;border:1px solid #777"></div><div class="t" style="left:123px;top:296.8px;font-size:9.5px;color:#222;">OFF</div><div class="a" style="left:230px;top:293px;width:11px;height:17px;background:linear-gradient(#5a5a5a,#404040);border:1px solid #2a2a2a"></div><svg class="a" style="left:233px;top:299.5px" width="6" height="4"><path d="M0 0 L6 0 L3 3Z" fill="#bbb"/></svg><div class="t" style="left:15px;top:208.8px;font-size:9.5px;color:#5aa2e6;">Takeoff weight (TOW):</div><div class="a" style="left:120px;top:206px;width:85px;height:16px;background:#fff;border:1px solid #888"></div><div class="t" style="left:123px;top:209.3px;font-size:9.5px;color:#222;">64378</div><div class="t" style="left:214px;top:208.8px;font-size:9.5px;color:#5aa2e6;">[kg]</div><div class="btn " style="left:249px;top:206px;width:32px;height:17px;font-size:10px;">Get</div><div class="btn " style="left:286px;top:206px;width:30px;height:17px;font-size:10px;">N</div><div class="t" style="left:15px;top:316.8px;font-size:9.5px;color:#5aa2e6;">Weather</div><div class="a" style="left:121px;top:312px;width:120px;height:45px;background:#d7d7d7;"></div><div class="t" style="left:124px;top:317.3px;font-size:8.5px;color:#555;">Wind 120°T @ 6KTS</div><div class="t" style="left:124px;top:328.3px;font-size:8.5px;color:#555;">Temp 16°C</div><div class="t" style="left:124px;top:339.3px;font-size:8.5px;color:#555;">QNH 1018</div><div class="btn " style="left:250px;top:314px;width:60px;height:18px;font-size:10px;outline:1px dotted #999;outline-offset:-3px">Refresh</div><svg class="a" style="left:125px;top:370px" width="10" height="30"><circle cx="5" cy="5" r="3.6" fill="#777"/><circle cx="5" cy="23" r="3.6" fill="#777"/><circle cx="5" cy="23" r="1.6" fill="#fff"/></svg><div class="t" style="left:140px;top:370.1px;font-size:9px;color:#bdbdbd;">Get from simulator (aircraft ambient)</div><div class="t" style="left:140px;top:388.1px;font-size:9px;color:#bdbdbd;">Get from current weather source (METAR)</div><div class="a" style="left:4px;top:440px;width:323px;height:30px;background:#2e2e2e;"></div><div class="btn " style="left:8px;top:444px;width:59px;height:22px;font-size:10px;">Arrivals</div><div class="btn " style="left:263px;top:444px;width:60px;height:22px;font-size:10px;">Calculate</div></div><div class="win" style="left:374px;top:473px;width:337px;height:474px;background:#1b1b1b"><div class="a" style="left:0px;top:0px;width:337px;height:22px;background:linear-gradient(#232323,#1b1b1b);"></div><svg class="a" style="left:6px;top:5px" width="10" height="12" viewBox="0 0 10 12"><path d="M3 1 L9 1 L7 11 L1 11 Z" fill="#6aa6e8"/><path d="M4 2 L8 2 L7 6 L3 6Z" fill="#bfe0ff"/></svg><div class="t" style="left:20px;top:5.4px;font-size:11px;color:#d8d8d8;">DEP / ARR</div><div class="a" style="left:317px;top:4px;width:14px;height:13px;background:#b01010"></div><svg class="a" style="left:317px;top:4px" width="14" height="13"><path d="M3.5 3 L10.5 10 M10.5 3 L3.5 10" stroke="#dcdcdc" stroke-width="2.2"/></svg><svg class="a" style="left:302px;top:5px" width="12" height="11"><rect x="1.5" y="1.5" width="9" height="8" fill="none" stroke="#dcdcdc" stroke-width="1.5"/><rect x="1.5" y="1.5" width="9" height="2.5" fill="#dcdcdc"/></svg><svg class="a" style="left:287px;top:5px" width="11" height="11"><rect x="1" y="6" width="9" height="2.5" fill="#dcdcdc"/></svg><div class="a" style="left:4px;top:22px;width:329px;height:35px;background:#3a3a3a;"></div><svg class="a" style="left:12px;top:30px" width="30" height="20" viewBox="1 2 22 14"><path d="M22.07 9.64c-.21-.8-1.04-1.28-1.84-1.06L14.92 10l-6.9-6.43-1.93.51 4.14 7.17-4.97 1.33-1.97-1.54-1.45.39 1.82 3.16.77 1.33 1.6-.43 5.31-1.42 4.35-1.16L21 11.49c.81-.23 1.28-1.05 1.07-1.85z" fill="#fff" transform="rotate(-12 12 10)"/></svg><div class="t" style="left:-32px;width:400px;text-align:center;top:31.0px;font-size:19px;color:#f0f0f0;">EINN - Departure</div><div class="a" style="left:4px;top:57px;width:329px;height:2px;background:#262626;"></div><div class="a" style="left:4px;top:59px;width:329px;height:26px;background:#393939;"></div><div class="tab" style="left:6px;top:61px;width:54px;height:22px;font-size:10px;">Weather</div><div class="tab" style="left:62px;top:61px;width:66px;height:22px;font-size:10px;">Procedures</div><div class="tab on" style="left:130px;top:61px;width:74px;height:22px;font-size:10px;">Performance</div><div class="a" style="left:4px;top:84px;width:329px;height:2px;background:#262626;"></div><div class="a" style="left:4px;top:86px;width:329px;height:352px;background:#3c3c3c;"></div><div class="tab" style="left:6px;top:95px;width:38px;height:21px;font-size:10px;">Data</div><div class="tab on" style="left:44px;top:95px;width:48px;height:21px;font-size:10px;">Report</div><div class="a" style="left:5px;top:116px;width:327px;height:322px;background:#242424;"></div><div class="a" style="left:6px;top:117px;width:325px;height:320px;background:#3a3a3a;"></div><pre class="a mono" style="left:8.7px;top:117px;font-size:9.7px;line-height:13.2px;color:#e4e4e4;margin:0">--------------------  WEATHER  ------------------------
TEMP +16C   QNH 1018   WIND 120/06 (02KT TW)

-------------------  CONDITIONS  ---------------------
TOW 64378 KG   CONF 3   THRUST FLEX   RWY DRY
AIR COND ON   ANTI ICE OFF

-------------------  FULL THRUST  --------------------
 OAT  Limit (kg)  Code   V1   VR   V2   Margin  N1
+16C  80000       FIELD  138  138  149  1599M   89.2

-----------------  REDUCED THRUST  -------------------
  FLEX  Limit (kg)  Code   V1   VR   V2   Margin  N1
  +62C  67897       FIELD  145  145  149  603M    82.8
  +63C  67065       FIELD  146  146  149  469M    82.7
  +64C  66391       FIELD  146  146  149  353M    82.6
  +65C  65717       FIELD  146  146  149  238M    82.5
//+66C  64885       FIELD  146  146  149  93M     82.3
  +67C NOT AUTH
  +68C NOT AUTH

-------------------  ENGINE OUT  ---------------------
RT TO &#39;ENS&#39; 352 (108 INBD,LT)</pre><div class="a" style="left:4px;top:438px;width:329px;height:32px;background:#2e2e2e;"></div><div class="btn " style="left:9px;top:443px;width:59px;height:23px;font-size:10px;">Arrivals</div><div class="btn " style="left:269px;top:444px;width:57px;height:23px;font-size:10px;outline:1px dotted #aaa;outline-offset:-3px">Calculate</div></div><div class="win" style="left:778px;top:171px;width:1142px;height:786px;background:#1d1d1d"><div class="a" style="left:0px;top:0px;width:1144px;height:22px;background:linear-gradient(#232323,#1b1b1b);"></div><svg class="a" style="left:6px;top:5px" width="10" height="12" viewBox="0 0 10 12"><path d="M3 1 L9 1 L7 11 L1 11 Z" fill="#6aa6e8"/><path d="M4 2 L8 2 L7 6 L3 6Z" fill="#bfe0ff"/></svg><div class="t" style="left:20px;top:5.7px;font-size:10.5px;color:#d8d8d8;">AivlaSoft EFB v2 - Client</div><div class="a" style="left:1124px;top:4px;width:14px;height:13px;background:#b01010"></div><svg class="a" style="left:1124px;top:4px" width="14" height="13"><path d="M3.5 3 L10.5 10 M10.5 3 L3.5 10" stroke="#dcdcdc" stroke-width="2.2"/></svg><svg class="a" style="left:1109px;top:5px" width="12" height="11"><rect x="1.5" y="1.5" width="9" height="8" fill="none" stroke="#dcdcdc" stroke-width="1.5"/><rect x="1.5" y="1.5" width="9" height="2.5" fill="#dcdcdc"/></svg><svg class="a" style="left:1094px;top:5px" width="11" height="11"><rect x="1" y="6" width="9" height="2.5" fill="#dcdcdc"/></svg><div class="a" style="left:4px;top:22px;width:1138px;height:708px;background:#393939;"></div><div class="btn " style="left:8px;top:27px;width:61px;height:23px;font-size:11px;"><svg style="position:absolute;left:5px;top:50%;margin-top:-7.5px" width="15" height="15" viewBox="0 0 16 17"><path d="M8 1 L8 15 M1 8 L15 8" stroke="#bbb" stroke-width="1"/><path d="M8 2.5 L13.5 8 L8 13.5 L2.5 8 Z" fill="none" stroke="#bbb" stroke-width="1.3"/><circle cx="8" cy="8" r="1.5" fill="#bbb"/></svg><span style="position:absolute;left:23px">Airports</span></div><div class="btn " style="left:75px;top:27px;width:26px;height:23px;font-size:14px;">ⓘ</div><div class="t" style="left:116px;top:32.4px;font-size:12px;color:#44cc22;font-weight:bold;">A</div><div class="t" style="left:128px;top:32.9px;font-size:12px;color:#e2e2e2;">LIRF - Fiumicino, Rome (Italy)</div><div class="t" style="left:734px;width:400px;text-align:right;top:24.5px;font-size:10px;color:#dedede;">NAV 113.3 OST / BRG 143°&nbsp;&nbsp; DIST 0.2 NM</div><div class="t" style="left:734px;width:400px;text-align:right;top:39.5px;font-size:10px;color:#dedede;">N41°48.6', E012°14.3'</div><div class="btn " style="left:8px;top:59px;width:61px;height:23px;font-size:10.5px;"><svg style="position:absolute;left:5px;top:50%;margin-top:-7.0px" width="14" height="14" viewBox="0 0 16 17"><path d="M4 15 Q1 15 1.5 12 Q2 9.5 5 10 Q5.5 6.5 9 7 Q12 7.5 12 10 Q15 10 14.5 13 Q14 15 12 15 Z" fill="none" stroke="#bbb" stroke-width="1.3"/><path d="M9 6.5 Q10 3 13 3.5 Q16 4.5 15 8" fill="none" stroke="#bbb" stroke-width="1.2"/></svg><span style="position:absolute;left:22px;color:#e4e4e4">Wx</span></div><div class="btn " style="left:8px;top:86px;width:61px;height:23px;font-size:10.5px;"><svg style="position:absolute;left:5px;top:50%;margin-top:-7.0px" width="14" height="14" viewBox="0 0 16 17"><circle cx="8" cy="9" r="6.3" fill="none" stroke="#bbb" stroke-width="1.4"/><path d="M4.5 6 L7 8 L6 11 M9 4 L10 7 L12.5 8 M9 14 L10 11" fill="none" stroke="#bbb" stroke-width="1.2"/></svg><span style="position:absolute;left:22px;color:#e4e4e4">PROC</span></div><div class="btn " style="left:8px;top:113px;width:61px;height:23px;font-size:10.5px;"><svg style="position:absolute;left:5px;top:50%;margin-top:-7.0px" width="14" height="14" viewBox="0 0 16 17"><path d="M8 16 L8 7 M8 7 L4 7 M4 7 L6.5 4.5 M4 7 L6.5 9.5 M8 8 L12 5 M8 10 L12 12" fill="none" stroke="#bbb" stroke-width="1.7"/></svg><span style="position:absolute;left:22px;color:#e4e4e4">Taxi</span></div><div class="btn " style="left:8px;top:149px;width:61px;height:23px;font-size:10.5px;"><svg style="position:absolute;left:5px;top:50%;margin-top:-7.0px" width="14" height="14" viewBox="0 0 16 17"><path d="M2 4 L6 2.5 L10 4 L14 2.5 L14 14 L10 15.5 L6 14 L2 15.5 Z" fill="none" stroke="#bbb" stroke-width="1.2"/><path d="M4 7 L8 11 M8 7 L4 11 M9 6 Q12 8 10 12" fill="none" stroke="#bbb" stroke-width="1.1"/></svg><span style="position:absolute;left:22px;color:#e4e4e4">FPL</span></div><div class="btn " style="left:8px;top:185px;width:61px;height:23px;font-size:10.5px;"><svg style="position:absolute;left:5px;top:50%;margin-top:-7.0px" width="14" height="14" viewBox="0 0 16 17"><path d="M3 11 L3 8 Q3 2.5 8 2.5 Q13 2.5 13 8 L13 11" fill="none" stroke="#bbb" stroke-width="1.5"/><rect x="1.5" y="9" width="3" height="5" rx="1" fill="#bbb"/><rect x="11.5" y="9" width="3" height="5" rx="1" fill="#bbb"/></svg><span style="position:absolute;left:22px;color:#e4e4e4">Radio</span></div><div class="btn " style="left:8px;top:212px;width:61px;height:23px;font-size:10.5px;"><svg style="position:absolute;left:5px;top:50%;margin-top:-7.0px" width="14" height="14" viewBox="0 0 16 17"><path d="M2 9 L6 13 L14 3" fill="none" stroke="#555" stroke-width="2.2"/><path d="M2 15 L14 15" stroke="#555" stroke-width="1"/></svg><span style="position:absolute;left:22px;color:#666">CHKL</span></div><div class="btn " style="left:8px;top:238px;width:61px;height:23px;font-size:10.5px;"><svg style="position:absolute;left:5px;top:50%;margin-top:-7.0px" width="14" height="14" viewBox="0 0 16 17"><path d="M5 4 L10 4 L13 7 L13 15 L5 15 Z M3 2 L9 2 M3 2 L3 13" fill="none" stroke="#bbb" stroke-width="1.3"/><path d="M10 4 L10 7 L13 7" fill="none" stroke="#bbb" stroke-width="1"/></svg><span style="position:absolute;left:22px;color:#e4e4e4">DOC</span></div><div class="btn " style="left:8px;top:265px;width:61px;height:23px;font-size:10.5px;"><svg style="position:absolute;left:5px;top:50%;margin-top:-7.0px" width="14" height="14" viewBox="0 0 16 17"><circle cx="5" cy="7" r="3" fill="none" stroke="#bbb" stroke-width="1.3"/><circle cx="11" cy="6" r="2.5" fill="none" stroke="#bbb" stroke-width="1.3"/><path d="M1 15 Q1 10.5 5 10.5 Q9 10.5 9 15 Z M8 13 Q8 9 11 9 Q15 9 15 13" fill="none" stroke="#bbb" stroke-width="1.3"/></svg><span style="position:absolute;left:22px;color:#e4e4e4">Utils</span></div><div class="a" style="left:8px;top:310px;width:17px;height:1px;background:#777;"></div><div class="a" style="left:8px;top:310px;width:1px;height:5px;background:#777;"></div><div class="a" style="left:52px;top:310px;width:17px;height:1px;background:#777;"></div><div class="a" style="left:68px;top:310px;width:1px;height:5px;background:#777;"></div><div class="t" style="left:-162px;width:400px;text-align:center;top:303.5px;font-size:10px;color:#9a9a9a;">RSB</div><div class="btn dim" style="left:8px;top:318.0px;width:61px;height:23px;font-size:10px;color:#626262">ORIG GND</div><div class="btn dim" style="left:8px;top:344.5px;width:61px;height:23px;font-size:10px;color:#626262">DEP</div><div class="btn dim" style="left:8px;top:371.0px;width:61px;height:23px;font-size:10px;color:#626262">DIR TO</div><div class="btn dim" style="left:8px;top:397.5px;width:61px;height:23px;font-size:10px;color:#626262">Adj CRZ ALT</div><div class="btn dim" style="left:8px;top:424.0px;width:61px;height:23px;font-size:10px;color:#626262">ARR</div><div class="btn dim" style="left:8px;top:450.5px;width:61px;height:23px;font-size:10px;color:#626262">DEST GND</div><div class="btn dim" style="left:8px;top:477.0px;width:61px;height:23px;font-size:10px;color:#626262">AUTO</div><div class="btn dim" style="left:8px;top:503.5px;width:61px;height:23px;font-size:10px;color:#626262">GoAround</div><svg class="sv" style="left:72px;top:56px" width="909" height="674" viewBox="850 227 909 674" font-family="Liberation Sans, sans-serif"><rect x="850" y="227" width="909" height="674" fill="#f4f3ef"/><polyline points="850,539 864,523 1030,461 1100,436" fill="none" stroke="#8e8e8e" stroke-width="0.8"/><polyline points="935,507 988,655" fill="none" stroke="#8e8e8e" stroke-width="0.8"/><polyline points="1204,461 1236,560" fill="none" stroke="#8e8e8e" stroke-width="0.8"/><polyline points="1672,480 1710,596 1710,612 1686,631 1600,655 1589,675 1655,901" fill="none" stroke="#8e8e8e" stroke-width="0.8"/><polyline points="1403,845 1421,901" fill="none" stroke="#8e8e8e" stroke-width="0.8"/><polyline points="1100,436 1204,461" fill="none" stroke="#8e8e8e" stroke-width="0.8"/><polygon points="1118,634 1206,600 1213,594 1258,594 1292,690 1290,716 1240,726 1228,726 1224,700 1216,670 1200,643 1180,634" fill="#a9a9a9"/><polygon points="1213,581 1338,522 1352,522 1358,558 1255,601" fill="#a9a9a9"/><polyline points="1292,498 1327,633 1344,690 1360,758" fill="none" stroke="#a9a9a9" stroke-width="9" stroke-linejoin="round"/><polyline points="1377,640 1362,758 1314,799 1200,843 1030,905" fill="none" stroke="#a9a9a9" stroke-width="10" stroke-linejoin="round"/><polyline points="1327,633 1288,714 1200,746 840,875" fill="none" stroke="#a9a9a9" stroke-width="10" stroke-linejoin="round"/><polyline points="1238,700 1235,830 1233,905" fill="none" stroke="#a9a9a9" stroke-width="10" stroke-linejoin="round"/><polygon points="1187,857 1242,838 1297,855 1314,901 1220,901 1210,862" fill="#a9a9a9"/><polyline points="1440,620 1400,640" fill="none" stroke="#a9a9a9" stroke-width="0" stroke-linejoin="round"/><polyline points="1296,498 1330,633 1347,690 1362,758" fill="none" stroke="#e8c410" stroke-width="1.3"/><polyline points="1377,640 1362,758 1314,799 1200,843 1030,905" fill="none" stroke="#e8c410" stroke-width="1.3"/><polyline points="1327,633 1288,714 1200,746 840,875" fill="none" stroke="#e8c410" stroke-width="1.3"/><polyline points="1222,594 1240,712 1236,830 1234,850 1240,880 1250,901" fill="none" stroke="#e8c410" stroke-width="1.3"/><polyline points="1247,594 1287,714" fill="none" stroke="#e8c410" stroke-width="1.3"/><polyline points="1216,590 1355,533" fill="none" stroke="#e8c410" stroke-width="1.3"/><polyline points="1300,520 1310,525" fill="none" stroke="#e8c410" stroke-width="1.3"/><polygon points="1336,498 1368,498 1392,587 1362,595" fill="#3d3d3d"/><polyline points="1340.0,511.0 1352.0,503.0 1364.0,508.0" fill="none" stroke="#e8c410" stroke-width="1.6"/><polyline points="1343.2,522.5 1355.2,514.5 1367.2,519.5" fill="none" stroke="#e8c410" stroke-width="1.6"/><polyline points="1346.4,534.0 1358.4,526.0 1370.4,531.0" fill="none" stroke="#e8c410" stroke-width="1.6"/><polyline points="1349.6,545.5 1361.6,537.5 1373.6,542.5" fill="none" stroke="#e8c410" stroke-width="1.6"/><polyline points="1352.8,557.0 1364.8,549.0 1376.8,554.0" fill="none" stroke="#e8c410" stroke-width="1.6"/><polyline points="1356.0,568.5 1368.0,560.5 1380.0,565.5" fill="none" stroke="#e8c410" stroke-width="1.6"/><polyline points="1359.2,580.0 1371.2,572.0 1383.2,577.0" fill="none" stroke="#e8c410" stroke-width="1.6"/><polyline points="1362.4,591.5 1374.4,583.5 1386.4,588.5" fill="none" stroke="#e8c410" stroke-width="1.6"/><polygon points="840,707.8 1200,576.4 1208,602.0 840,736.3" fill="#3c3c3c"/><line x1="870" y1="711.4" x2="892" y2="703.3" stroke="#fff" stroke-width="1.4"/><line x1="915" y1="694.9" x2="937" y2="686.9" stroke="#fff" stroke-width="1.4"/><line x1="960" y1="678.5" x2="982" y2="670.5" stroke="#fff" stroke-width="1.4"/><line x1="1005" y1="662.1" x2="1027" y2="654.0" stroke="#fff" stroke-width="1.4"/><line x1="1050" y1="645.6" x2="1072" y2="637.6" stroke="#fff" stroke-width="1.4"/><line x1="1095" y1="629.2" x2="1117" y2="621.2" stroke="#fff" stroke-width="1.4"/><line x1="1140" y1="612.8" x2="1162" y2="604.8" stroke="#fff" stroke-width="1.4"/><line x1="952" y1="673.9" x2="985" y2="661.9" stroke="#fff" stroke-width="4.5"/><line x1="952" y1="688.9" x2="985" y2="676.9" stroke="#fff" stroke-width="4.5"/><line x1="1185" y1="584.9" x2="1193" y2="605.0" stroke="#ddd" stroke-width="18" opacity="0.9"/><path d="M1165 588 L1178 612 M1158 604 L1190 590 M1172 592 L1176 604" stroke="#e020e0" stroke-width="2.4" fill="none"/><path d="M905 700 L877 712 M877 712 L884 706 M877 712 L885 714" stroke="#e020e0" stroke-width="1.6" fill="none"/><g transform="translate(1229,580) rotate(-20)"><rect x="-22" y="-22" width="44" height="44" fill="#2aa52a"/><text x="-5" y="9" font-size="24" fill="#fff" text-anchor="middle" transform="rotate(-90 -5 0)">25</text><text x="12" y="3" font-size="8" fill="#fff" text-anchor="middle" transform="rotate(-90 12 0)">247°</text></g><g transform="translate(1387,617) rotate(-20)"><rect x="-29" y="-25" width="58" height="50" fill="#2aa52a"/><text x="0" y="6" font-size="25" fill="#fff" text-anchor="middle">34C</text><text x="2" y="18" font-size="9" fill="#fff" text-anchor="middle">340°</text></g><polygon points="1503,408 1506,410 1518,453 1503,459" fill="#2aa52a"/><path d="M1503 437 L1506 433 L1508 438" stroke="#fff" stroke-width="1" fill="none"/><rect x="1290.5" y="510" width="11" height="15" fill="#111" stroke="#e8c410" stroke-width="0.8"/><text x="1296" y="522" font-size="10" font-weight="bold" fill="#f0c818" text-anchor="middle">C</text><rect x="1316.5" y="594" width="11" height="15" fill="#111" stroke="#e8c410" stroke-width="0.8"/><text x="1322" y="606" font-size="10" font-weight="bold" fill="#f0c818" text-anchor="middle">C</text><rect x="1229.0" y="630" width="22" height="15" fill="#111" stroke="#e8c410" stroke-width="0.8"/><text x="1240" y="642" font-size="10" font-weight="bold" fill="#f0c818" text-anchor="middle">BA1</text><rect x="1257.0" y="620" width="22" height="15" fill="#111" stroke="#e8c410" stroke-width="0.8"/><text x="1268" y="632" font-size="10" font-weight="bold" fill="#f0c818" text-anchor="middle">BA2</text><rect x="1380.5" y="656" width="11" height="15" fill="#111" stroke="#e8c410" stroke-width="0.8"/><text x="1386" y="668" font-size="10" font-weight="bold" fill="#f0c818" text-anchor="middle">D</text><text x="1278" y="573" font-size="9.5" font-weight="bold" fill="#111" text-anchor="middle">BT</text><text x="1338" y="551" font-size="9.5" font-weight="bold" fill="#111" text-anchor="middle">CL</text><text x="1341" y="667" font-size="9.5" font-weight="bold" fill="#111" text-anchor="middle">C</text><text x="1312" y="683" font-size="9.5" font-weight="bold" fill="#111" text-anchor="middle">B</text><text x="1253" y="711" font-size="9.5" font-weight="bold" fill="#111" text-anchor="middle">BA1</text><text x="1269" y="732" font-size="9.5" font-weight="bold" fill="#111" text-anchor="middle">B</text><text x="1359" y="729" font-size="9.5" font-weight="bold" fill="#111" text-anchor="middle">CM</text><text x="1248" y="789" font-size="9.5" font-weight="bold" fill="#111" text-anchor="middle">BA1</text><text x="1341" y="789" font-size="9.5" font-weight="bold" fill="#111" text-anchor="middle">D</text><text x="1035" y="814" font-size="9.5" font-weight="bold" fill="#111" text-anchor="middle">B</text><text x="1277" y="824" font-size="9.5" font-weight="bold" fill="#111" text-anchor="middle">D</text><text x="1071" y="900" font-size="9.5" font-weight="bold" fill="#111" text-anchor="middle">D</text><text x="1208" y="585" font-size="9.5" font-weight="bold" fill="#111" text-anchor="middle">B1</text><path d="M1299 564 L1309 564 M1304 559 L1304 569" stroke="#e02020" stroke-width="1"/><line x1="1187.1" y1="311.4" x2="1187.9" y2="296.4" stroke="#1c1ccc" stroke-width="2.6"/><text x="1186.3" y="331.9" font-size="15.2" font-weight="bold" fill="#1c1ccc" text-anchor="middle">N</text><line x1="1212.5" y1="310.8" x2="1214.2" y2="298.9" stroke="#1c1ccc" stroke-width="1.1"/><line x1="1237.5" y1="315.5" x2="1240.2" y2="303.8" stroke="#1c1ccc" stroke-width="1.1"/><line x1="1261.0" y1="325.1" x2="1265.6" y2="310.8" stroke="#1c1ccc" stroke-width="2.6"/><text x="1256.4" y="343.1" font-size="10.5" font-weight="normal" fill="#1c1ccc" text-anchor="middle">015</text><line x1="1285.7" y1="331.1" x2="1290.4" y2="320.1" stroke="#1c1ccc" stroke-width="1.1"/><line x1="1308.6" y1="342.1" x2="1314.2" y2="331.5" stroke="#1c1ccc" stroke-width="1.1"/><line x1="1328.9" y1="357.5" x2="1337.0" y2="344.9" stroke="#1c1ccc" stroke-width="2.6"/><text x="1320.7" y="373.8" font-size="10.5" font-weight="normal" fill="#1c1ccc" text-anchor="middle">030</text><line x1="1351.2" y1="369.7" x2="1358.5" y2="360.2" stroke="#1c1ccc" stroke-width="1.1"/><line x1="1370.5" y1="386.2" x2="1378.6" y2="377.4" stroke="#1c1ccc" stroke-width="1.1"/><line x1="1386.0" y1="406.3" x2="1397.2" y2="396.3" stroke="#1c1ccc" stroke-width="2.6"/><text x="1374.9" y="420.6" font-size="11.8" font-weight="bold" fill="#1c1ccc" text-anchor="middle">045</text><line x1="1404.4" y1="423.9" x2="1414.0" y2="416.7" stroke="#1c1ccc" stroke-width="1.1"/><line x1="1418.8" y1="444.8" x2="1429.0" y2="438.4" stroke="#1c1ccc" stroke-width="1.1"/><line x1="1428.6" y1="468.3" x2="1442.0" y2="461.4" stroke="#1c1ccc" stroke-width="2.6"/><text x="1415.2" y="478.8" font-size="10.5" font-weight="normal" fill="#1c1ccc" text-anchor="middle">060</text><line x1="1441.8" y1="490.0" x2="1452.9" y2="485.5" stroke="#1c1ccc" stroke-width="1.1"/><line x1="1450.3" y1="513.9" x2="1461.8" y2="510.4" stroke="#1c1ccc" stroke-width="1.1"/><line x1="1453.7" y1="539.1" x2="1468.4" y2="536.0" stroke="#1c1ccc" stroke-width="2.6"/><text x="1439.0" y="546.0" font-size="10.5" font-weight="normal" fill="#1c1ccc" text-anchor="middle">075</text><line x1="1460.8" y1="563.5" x2="1472.7" y2="562.1" stroke="#1c1ccc" stroke-width="1.1"/><line x1="1462.8" y1="588.8" x2="1474.8" y2="588.4" stroke="#1c1ccc" stroke-width="1.1"/><line x1="1459.6" y1="614.1" x2="1474.6" y2="614.9" stroke="#1c1ccc" stroke-width="2.6"/><text x="1444.6" y="618.8" font-size="15.2" font-weight="bold" fill="#1c1ccc" text-anchor="middle">E</text><line x1="1460.2" y1="639.5" x2="1472.1" y2="641.2" stroke="#1c1ccc" stroke-width="1.1"/><line x1="1455.5" y1="664.5" x2="1467.2" y2="667.2" stroke="#1c1ccc" stroke-width="1.1"/><line x1="1445.9" y1="688.0" x2="1460.2" y2="692.6" stroke="#1c1ccc" stroke-width="2.6"/><text x="1431.6" y="687.1" font-size="10.5" font-weight="normal" fill="#1c1ccc" text-anchor="middle">105</text><line x1="1439.9" y1="712.7" x2="1450.9" y2="717.4" stroke="#1c1ccc" stroke-width="1.1"/><line x1="1428.9" y1="735.6" x2="1439.5" y2="741.2" stroke="#1c1ccc" stroke-width="1.1"/><line x1="1413.5" y1="755.9" x2="1426.1" y2="764.0" stroke="#1c1ccc" stroke-width="2.6"/><text x="1401.0" y="751.5" font-size="10.5" font-weight="normal" fill="#1c1ccc" text-anchor="middle">120</text><line x1="1401.3" y1="778.2" x2="1410.8" y2="785.5" stroke="#1c1ccc" stroke-width="1.1"/><line x1="1384.8" y1="797.5" x2="1393.6" y2="805.6" stroke="#1c1ccc" stroke-width="1.1"/><line x1="1364.7" y1="813.0" x2="1374.7" y2="824.2" stroke="#1c1ccc" stroke-width="2.6"/><text x="1354.7" y="806.1" font-size="11.8" font-weight="bold" fill="#1c1ccc" text-anchor="middle">135</text><line x1="1347.1" y1="831.4" x2="1354.3" y2="841.0" stroke="#1c1ccc" stroke-width="1.1"/><line x1="1326.2" y1="845.8" x2="1332.6" y2="856.0" stroke="#1c1ccc" stroke-width="1.1"/><line x1="1302.7" y1="855.6" x2="1309.6" y2="869.0" stroke="#1c1ccc" stroke-width="2.6"/><text x="1295.9" y="846.0" font-size="10.5" font-weight="normal" fill="#1c1ccc" text-anchor="middle">150</text><line x1="1281.0" y1="868.8" x2="1285.5" y2="879.9" stroke="#1c1ccc" stroke-width="1.1"/><line x1="1257.1" y1="877.3" x2="1260.6" y2="888.8" stroke="#1c1ccc" stroke-width="1.1"/><line x1="1231.9" y1="880.7" x2="1235.0" y2="895.4" stroke="#1c1ccc" stroke-width="2.6"/><text x="1228.8" y="869.8" font-size="10.5" font-weight="normal" fill="#1c1ccc" text-anchor="middle">165</text><line x1="1207.5" y1="887.8" x2="1208.9" y2="899.7" stroke="#1c1ccc" stroke-width="1.1"/><line x1="1182.2" y1="889.8" x2="1182.6" y2="901.8" stroke="#1c1ccc" stroke-width="1.1"/><line x1="1156.9" y1="886.6" x2="1156.1" y2="901.6" stroke="#1c1ccc" stroke-width="2.6"/><text x="1157.7" y="877.1" font-size="15.2" font-weight="bold" fill="#1c1ccc" text-anchor="middle">S</text><line x1="1131.5" y1="887.2" x2="1129.8" y2="899.1" stroke="#1c1ccc" stroke-width="1.1"/><line x1="1106.5" y1="882.5" x2="1103.8" y2="894.2" stroke="#1c1ccc" stroke-width="1.1"/><line x1="1083.0" y1="872.9" x2="1078.4" y2="887.2" stroke="#1c1ccc" stroke-width="2.6"/><text x="1087.6" y="862.4" font-size="10.5" font-weight="normal" fill="#1c1ccc" text-anchor="middle">195</text><line x1="1058.3" y1="866.9" x2="1053.6" y2="877.9" stroke="#1c1ccc" stroke-width="1.1"/><line x1="1035.4" y1="855.9" x2="1029.8" y2="866.5" stroke="#1c1ccc" stroke-width="1.1"/><line x1="1015.1" y1="840.5" x2="1007.0" y2="853.1" stroke="#1c1ccc" stroke-width="2.6"/><text x="1023.3" y="831.7" font-size="10.5" font-weight="normal" fill="#1c1ccc" text-anchor="middle">210</text><line x1="992.8" y1="828.3" x2="985.5" y2="837.8" stroke="#1c1ccc" stroke-width="1.1"/><line x1="973.5" y1="811.8" x2="965.4" y2="820.6" stroke="#1c1ccc" stroke-width="1.1"/><line x1="958.0" y1="791.7" x2="946.8" y2="801.7" stroke="#1c1ccc" stroke-width="2.6"/><text x="969.1" y="785.9" font-size="11.8" font-weight="bold" fill="#1c1ccc" text-anchor="middle">225</text><line x1="939.6" y1="774.1" x2="930.0" y2="781.3" stroke="#1c1ccc" stroke-width="1.1"/><line x1="925.2" y1="753.2" x2="915.0" y2="759.6" stroke="#1c1ccc" stroke-width="1.1"/><line x1="915.4" y1="729.7" x2="902.0" y2="736.6" stroke="#1c1ccc" stroke-width="2.6"/><text x="928.8" y="726.7" font-size="10.5" font-weight="normal" fill="#1c1ccc" text-anchor="middle">240</text><line x1="902.2" y1="708.0" x2="891.1" y2="712.5" stroke="#1c1ccc" stroke-width="1.1"/><line x1="893.7" y1="684.1" x2="882.2" y2="687.6" stroke="#1c1ccc" stroke-width="1.1"/><line x1="890.3" y1="658.9" x2="875.6" y2="662.0" stroke="#1c1ccc" stroke-width="2.6"/><text x="905.0" y="659.5" font-size="10.5" font-weight="normal" fill="#1c1ccc" text-anchor="middle">255</text><line x1="883.2" y1="634.5" x2="871.3" y2="635.9" stroke="#1c1ccc" stroke-width="1.1"/><line x1="881.2" y1="609.2" x2="869.2" y2="609.6" stroke="#1c1ccc" stroke-width="1.1"/><line x1="884.4" y1="583.9" x2="869.4" y2="583.1" stroke="#1c1ccc" stroke-width="2.6"/><text x="899.4" y="590.2" font-size="15.2" font-weight="bold" fill="#1c1ccc" text-anchor="middle">W</text><line x1="883.8" y1="558.5" x2="871.9" y2="556.8" stroke="#1c1ccc" stroke-width="1.1"/><line x1="888.5" y1="533.5" x2="876.8" y2="530.8" stroke="#1c1ccc" stroke-width="1.1"/><line x1="898.1" y1="510.0" x2="883.8" y2="505.4" stroke="#1c1ccc" stroke-width="2.6"/><text x="912.4" y="518.4" font-size="10.5" font-weight="normal" fill="#1c1ccc" text-anchor="middle">285</text><line x1="904.1" y1="485.3" x2="893.1" y2="480.6" stroke="#1c1ccc" stroke-width="1.1"/><line x1="915.1" y1="462.4" x2="904.5" y2="456.8" stroke="#1c1ccc" stroke-width="1.1"/><line x1="930.5" y1="442.1" x2="917.9" y2="434.0" stroke="#1c1ccc" stroke-width="2.6"/><text x="943.0" y="454.1" font-size="10.5" font-weight="normal" fill="#1c1ccc" text-anchor="middle">300</text><line x1="942.7" y1="419.8" x2="933.2" y2="412.5" stroke="#1c1ccc" stroke-width="1.1"/><line x1="959.2" y1="400.5" x2="950.4" y2="392.4" stroke="#1c1ccc" stroke-width="1.1"/><line x1="979.3" y1="385.0" x2="969.3" y2="373.8" stroke="#1c1ccc" stroke-width="2.6"/><text x="989.3" y="400.4" font-size="11.8" font-weight="bold" fill="#1c1ccc" text-anchor="middle">315</text><line x1="996.9" y1="366.6" x2="989.7" y2="357.0" stroke="#1c1ccc" stroke-width="1.1"/><line x1="1017.8" y1="352.2" x2="1011.4" y2="342.0" stroke="#1c1ccc" stroke-width="1.1"/><line x1="1041.3" y1="342.4" x2="1034.4" y2="329.0" stroke="#1c1ccc" stroke-width="2.6"/><text x="1048.1" y="359.5" font-size="10.5" font-weight="normal" fill="#1c1ccc" text-anchor="middle">330</text><line x1="1063.0" y1="329.2" x2="1058.5" y2="318.1" stroke="#1c1ccc" stroke-width="1.1"/><line x1="1086.9" y1="320.7" x2="1083.4" y2="309.2" stroke="#1c1ccc" stroke-width="1.1"/><line x1="1112.1" y1="317.3" x2="1109.0" y2="302.6" stroke="#1c1ccc" stroke-width="2.6"/><text x="1115.2" y="335.7" font-size="10.5" font-weight="normal" fill="#1c1ccc" text-anchor="middle">345</text><line x1="1136.5" y1="310.2" x2="1135.1" y2="298.3" stroke="#1c1ccc" stroke-width="1.1"/><line x1="1161.8" y1="308.2" x2="1161.4" y2="296.2" stroke="#1c1ccc" stroke-width="1.1"/><polygon points="884,476 881,490 944,507 935,497" fill="#3a86e8"/><text x="888" y="487" font-size="8" fill="#fff" transform="rotate(20 888 487)" font-weight="bold">8 <tspan font-weight="normal">KTS</tspan></text><line x1="887" y1="238" x2="887" y2="286" stroke="#111" stroke-width="1.2"/><path d="M887 235 L882 256 L887 253 Z" fill="#111"/><path d="M888 249 L894 264 L888 262 Z" fill="#fff" stroke="#111" stroke-width="0.7"/><text x="886" y="297" font-size="8.5" fill="#222" text-anchor="middle">VAR 3.0° East</text><text x="886" y="309" font-size="8.5" fill="#222" text-anchor="middle">NORTH UP</text><rect x="1244" y="889" width="124" height="12" fill="#e4e4e4"/><text x="1247" y="898" font-size="7.5" fill="#333">N41°48.6', E012°16.3' Z=0.3NMt</text><polyline points="1583,880 1583,900 M1583,889" stroke="#333" fill="none"/><line x1="1583" y1="880" x2="1583" y2="901" stroke="#444" stroke-width="1"/><line x1="1583" y1="889" x2="1756" y2="889" stroke="#444" stroke-width="1"/><line x1="1690" y1="880" x2="1690" y2="889" stroke="#444" stroke-width="1"/><line x1="1756" y1="889" x2="1756" y2="901" stroke="#444" stroke-width="1"/><text x="1636" y="887" font-size="7.5" fill="#222" text-anchor="middle">0.1 nm</text><text x="1669" y="898" font-size="7.5" fill="#222" text-anchor="middle">300 m</text></svg><div class="a" style="left:981px;top:56px;width:7px;height:674px;background:#2a2a2a;"></div><div class="a" style="left:984px;top:384px;width:3px;height:16px;background:#555;"></div><div class="a" style="left:988px;top:56px;width:150px;height:674px;background:#262626;"></div><div class="a" style="left:988px;top:57px;width:148px;height:33px;background:#282828;"></div><div class="btn " style="left:988px;top:91px;width:148px;height:24px;font-size:10px;"></div><div class="a" style="left:988px;top:115px;width:148px;height:32px;background:#292929;"></div><div class="btn " style="left:988px;top:147px;width:148px;height:23px;font-size:10px;"></div><div class="t" style="left:1126px;top:153.1px;font-size:9px;color:#aaa;">^</div><div class="a" style="left:1082px;top:222px;width:40px;height:1px;background:#444;"></div><div class="t" style="left:1093px;top:226.5px;font-size:10px;color:#e0e0e0;">5 KTS</div><div class="t" style="left:1093px;top:242.5px;font-size:10px;color:#e0e0e0;">/330°</div><div class="t" style="left:1093px;top:258.5px;font-size:10px;color:#e0e0e0;">18°C</div><div class="t" style="left:1093px;top:274.5px;font-size:10px;color:#e0e0e0;">9.71</div><div class="t" style="left:1093px;top:290.5px;font-size:10px;color:#ff2020;font-weight:bold;">29.92</div><div class="t" style="left:1002px;top:307.5px;font-size:10px;color:#5aa2e6;">Flight COND</div><div class="t" style="left:1061px;top:307.5px;font-size:10px;color:#2ec02e;">VMC</div><div class="btn " style="left:988px;top:326px;width:148px;height:23px;font-size:11px;">A/C - Ambient</div><svg class="a" style="left:991px;top:328px" width="20" height="20" viewBox="0 0 24 24"><path d="M21 16v-2l-8-5V3.5c0-.83-.67-1.5-1.5-1.5S10 2.67 10 3.5V9l-8 5v2l8-2.5V19l-2 1.5V22l3.5-1 3.5 1v-1.5L13 19v-5.5l8 2.5z" fill="#fff" transform="rotate(90 12 12)"/></svg><div class="t" style="left:1126px;top:333.1px;font-size:9px;color:#aaa;">^</div><div class="t" style="left:646px;width:400px;text-align:right;top:353.5px;font-size:10px;color:#5aa2e6;">GW</div><div class="t" style="left:1052px;top:353.5px;font-size:10px;color:#e0e0e0;">64230 kg</div><div class="t" style="left:646px;width:400px;text-align:right;top:369.5px;font-size:10px;color:#5aa2e6;">FOB</div><div class="t" style="left:1052px;top:369.5px;font-size:10px;color:#e0e0e0;">14990 kg</div><div class="t" style="left:646px;width:400px;text-align:right;top:385.5px;font-size:10px;color:#5aa2e6;">GS</div><div class="t" style="left:1052px;top:385.5px;font-size:10px;color:#e0e0e0;">0 KTS</div><div class="a" style="left:996px;top:402px;width:126px;height:1px;background:#4a4a4a;"></div><div class="t" style="left:646px;width:400px;text-align:right;top:404.5px;font-size:10px;color:#5aa2e6;">Wind</div><div class="t" style="left:1052px;top:404.5px;font-size:10px;color:#e0e0e0;">292°T at 8 KTS</div><div class="t" style="left:646px;width:400px;text-align:right;top:421.5px;font-size:10px;color:#5aa2e6;">OAT</div><div class="t" style="left:1052px;top:421.5px;font-size:10px;color:#e0e0e0;">15°C (ISA)</div><svg class="a" style="left:1002px;top:449px" width="130" height="110" viewBox="1780 620 130 110"><path d="M1834 632 Q1840 624 1846 632 L1847 668 L1892 684 L1892 692 L1847 685 L1846 712 L1862 722 L1862 728 L1840 724 L1818 728 L1818 722 L1834 712 L1833 685 L1789 692 L1789 684 L1833 668 Z" fill="#8a8a8a"/><polygon points="1843,672 1884,622 1891,632" fill="#3a86e8"/><rect x="1822" y="622" width="36" height="15" fill="#262626" stroke="#555" stroke-width="0.8"/><text x="1840" y="633" font-size="9.5" fill="#e0e0e0" text-anchor="middle" font-family="Liberation Sans">6 KTS</text><rect x="1871" y="667" width="37" height="15" fill="#3a3a3a" stroke="#555" stroke-width="0.8" opacity="0.9"/><text x="1890" y="678" font-size="9.5" fill="#e0e0e0" text-anchor="middle" font-family="Liberation Sans">5 KTS</text></svg><div class="btn " style="left:988px;top:576px;width:148px;height:23px;font-size:11.5px;">Auto zoom</div><svg class="a" style="left:992px;top:578px" width="20" height="20"><circle cx="8" cy="8" r="5.5" fill="none" stroke="#fff" stroke-width="1.8"/><line x1="12" y1="12" x2="17" y2="17" stroke="#fff" stroke-width="2.5"/></svg><div class="t" style="left:1126px;top:583.0px;font-size:9px;color:#aaa;">^</div><div class="t" style="left:1001px;top:603.5px;font-size:10px;color:#5aa2e6;">Level</div><div class="t" style="left:1028px;top:603.5px;font-size:10px;color:#e0e0e0;">Ground, no Speed</div><div class="a" style="left:4px;top:730px;width:1138px;height:52px;background:#353535;"></div><div class="btn " style="left:8px;top:746px;width:56px;height:23px;font-size:10px;"><svg width="15" height="15"><circle cx="7.5" cy="7.5" r="5.8" fill="none" stroke="#fff" stroke-width="2.2"/><line x1="7.5" y1="4" x2="7.5" y2="10" stroke="#fff" stroke-width="2.2"/></svg></div><div class="a" style="left:69px;top:737px;width:237px;height:6px;border:1px solid #5a5a5a;border-bottom:none"></div><div class="t" style="left:147.5px;width:80px;text-align:center;top:733px;font-size:9px;color:#9a9a9a"><span style="background:#353535;padding:0 1px">Map</span></div><div class="a" style="left:314px;top:737px;width:197px;height:6px;border:1px solid #5a5a5a;border-bottom:none"></div><div class="t" style="left:372.5px;width:80px;text-align:center;top:733px;font-size:9px;color:#9a9a9a"><span style="background:#353535;padding:0 1px">Aircraft</span></div><div class="a" style="left:519px;top:737px;width:117px;height:6px;border:1px solid #5a5a5a;border-bottom:none"></div><div class="t" style="left:537.5px;width:80px;text-align:center;top:733px;font-size:9px;color:#9a9a9a"><span style="background:#353535;padding:0 1px">Airports</span></div><div class="a" style="left:642px;top:737px;width:159px;height:6px;border:1px solid #5a5a5a;border-bottom:none"></div><div class="t" style="left:681.5px;width:80px;text-align:center;top:733px;font-size:9px;color:#9a9a9a"><span style="background:#353535;padding:0 1px">Navaids</span></div><div class="a" style="left:809px;top:737px;width:317px;height:6px;border:1px solid #5a5a5a;border-bottom:none"></div><div class="t" style="left:927.5px;width:80px;text-align:center;top:733px;font-size:9px;color:#9a9a9a"><span style="background:#353535;padding:0 1px">Misc</span></div><div class="btn " style="left:69px;top:746px;width:38px;height:23px;font-size:14px;color:#ececec"><svg width="18" height="18" viewBox="0 0 18 18"><circle cx="9" cy="9" r="4.2" fill="none" stroke="#fff" stroke-width="1.4"/><path d="M9 4.8 A4.2 4.2 0 0 1 9 13.2Z" fill="#fff"/><g stroke="#fff" stroke-width="1.3"><line x1="9" y1="1" x2="9" y2="3"/><line x1="9" y1="15" x2="9" y2="17"/><line x1="1" y1="9" x2="3" y2="9"/><line x1="15" y1="9" x2="17" y2="9"/><line x1="3.3" y1="3.3" x2="4.7" y2="4.7"/><line x1="13.3" y1="13.3" x2="14.7" y2="14.7"/><line x1="3.3" y1="14.7" x2="4.7" y2="13.3"/><line x1="13.3" y1="4.7" x2="14.7" y2="3.3"/></g></svg></div><div class="btn " style="left:109px;top:746px;width:38px;height:23px;font-size:15px;color:#ececec"><svg width="18" height="18" viewBox="0 0 18 18"><g fill="none" stroke="#fff" stroke-width="1.3"><circle cx="9" cy="9" r="7.2"/><ellipse cx="9" cy="9" rx="3.2" ry="7.2"/><line x1="9" y1="1.8" x2="9" y2="16.2"/><line x1="1.8" y1="9" x2="16.2" y2="9"/><line x1="3" y1="5" x2="15" y2="5"/><line x1="3" y1="13" x2="15" y2="13"/></g></svg></div><div class="btn " style="left:149px;top:746px;width:38px;height:23px;font-size:10px;color:#ececec">MvMp</div><div class="btn " style="left:189px;top:746px;width:38px;height:23px;font-size:10px;color:#5c5c5c">HDG up</div><div class="btn " style="left:229px;top:746px;width:38px;height:23px;font-size:10px;color:#ececec"><svg width="18" height="18"><circle cx="7" cy="7" r="5" fill="none" stroke="#fff" stroke-width="1.6"/><line x1="10.5" y1="10.5" x2="16" y2="16" stroke="#fff" stroke-width="2.4"/></svg></div><div class="btn " style="left:269px;top:746px;width:38px;height:23px;font-size:10px;color:#ececec"><svg width="18" height="16"><path d="M2 4 L6 2 L11 4 L16 2 L16 13 L11 15 L6 13 L2 15 Z M6 2 L6 13 M11 4 L11 15" fill="none" stroke="#fff" stroke-width="1.3"/></svg></div><div class="btn " style="left:314px;top:746px;width:38px;height:23px;font-size:10px;color:#ececec">ACFT</div><div class="a" style="left:320px;top:765px;width:26px;height:2px;background:#22cc22;"></div><div class="btn " style="left:354px;top:746px;width:38px;height:23px;font-size:10px;color:#ececec">CMPS</div><div class="a" style="left:360px;top:765px;width:26px;height:2px;background:#22cc22;"></div><div class="btn " style="left:394px;top:746px;width:38px;height:23px;font-size:10px;color:#ececec">RNG</div><div class="btn " style="left:434px;top:746px;width:38px;height:23px;font-size:10px;color:#ececec">VCT</div><div class="btn " style="left:474px;top:746px;width:38px;height:23px;font-size:10px;color:#5c5c5c">ARC</div><div class="btn " style="left:519px;top:746px;width:38px;height:23px;font-size:10px;color:#5c5c5c">ARPT</div><div class="btn " style="left:559px;top:746px;width:38px;height:23px;font-size:10px;color:#5c5c5c">WX</div><div class="btn " style="left:599px;top:746px;width:38px;height:23px;font-size:10px;color:#5c5c5c">TERR</div><div class="btn " style="left:642px;top:746px;width:38px;height:23px;font-size:10px;color:#ececec">VOR</div><div class="a" style="left:648px;top:765px;width:26px;height:2px;background:#22cc22;"></div><div class="btn " style="left:684px;top:746px;width:38px;height:23px;font-size:10px;color:#ececec">NDB</div><div class="a" style="left:690px;top:765px;width:26px;height:2px;background:#22cc22;"></div><div class="btn " style="left:724px;top:746px;width:38px;height:23px;font-size:10px;color:#ececec">DME</div><div class="a" style="left:730px;top:765px;width:26px;height:2px;background:#22cc22;"></div><div class="btn " style="left:764px;top:746px;width:38px;height:23px;font-size:10px;color:#5c5c5c">FIX</div><div class="btn " style="left:809px;top:746px;width:38px;height:23px;font-size:10px;color:#5c5c5c">CITY</div><div class="btn " style="left:849px;top:746px;width:38px;height:23px;font-size:10px;color:#5c5c5c">AWYL</div><div class="btn " style="left:889px;top:746px;width:38px;height:23px;font-size:10px;color:#5c5c5c">AWYH</div><div class="btn " style="left:929px;top:746px;width:38px;height:23px;font-size:10px;color:#5c5c5c">OTRK</div><div class="btn " style="left:969px;top:746px;width:38px;height:23px;font-size:10px;color:#ececec">TRFC</div><div class="btn " style="left:1009px;top:746px;width:38px;height:23px;font-size:10px;color:#ececec">T/LBL</div><div class="a" style="left:1015px;top:765px;width:26px;height:2px;background:#22cc22;"></div><div class="btn " style="left:1049px;top:746px;width:38px;height:23px;font-size:10px;color:#5c5c5c">TCAS</div><div class="btn " style="left:1089px;top:746px;width:38px;height:23px;font-size:10px;color:#5c5c5c">O/END</div><div class="a" style="left:8px;top:771px;width:53px;height:13px;background:#128a12;"></div><div class="t" style="left:13px;top:772.8px;font-size:9.5px;color:#d8ffd8;">CPU: 0.6%</div><div class="t" style="left:75px;top:772.8px;font-size:9.5px;color:#3a9ae6;">Master</div><div class="t" style="left:180px;top:773.0px;font-size:9px;color:#aaa;">WX: Real world</div><div class="t" style="left:534px;top:771.4px;font-size:12px;color:#cfcfcf;font-style:italic">AivlaSoft EFB</div><div class="t" style="left:835px;top:773.0px;font-size:9px;color:#aaa;">NAV: AS-1806/R1</div><div class="t" style="left:942px;top:773.0px;font-size:9px;color:#aaa;">SIM: FSX</div><div class="t" style="left:1049px;top:773.0px;font-size:9px;color:#aaa;">Version 2.0 (build #68)</div></div><div class="win" style="left:986px;top:34px;width:279px;height:427px;background:#1b1b1b"><div class="a" style="left:0px;top:0px;width:279px;height:18px;background:linear-gradient(#232323,#1b1b1b);"></div><svg class="a" style="left:6px;top:3px" width="10" height="12" viewBox="0 0 10 12"><path d="M3 1 L9 1 L7 11 L1 11 Z" fill="#6aa6e8"/><path d="M4 2 L8 2 L7 6 L3 6Z" fill="#bfe0ff"/></svg><div class="t" style="left:20px;top:4.0px;font-size:10px;color:#d8d8d8;">DEP / ARR</div><div class="a" style="left:259px;top:2px;width:14px;height:13px;background:#b01010"></div><svg class="a" style="left:259px;top:2px" width="14" height="13"><path d="M3.5 3 L10.5 10 M10.5 3 L3.5 10" stroke="#dcdcdc" stroke-width="2.2"/></svg><svg class="a" style="left:244px;top:3px" width="12" height="11"><rect x="1.5" y="1.5" width="9" height="8" fill="none" stroke="#dcdcdc" stroke-width="1.5"/><rect x="1.5" y="1.5" width="9" height="2.5" fill="#dcdcdc"/></svg><svg class="a" style="left:229px;top:3px" width="11" height="11"><rect x="1" y="6" width="9" height="2.5" fill="#dcdcdc"/></svg><div class="a" style="left:4px;top:18px;width:271px;height:32px;background:#3a3a3a;"></div><svg class="a" style="left:10px;top:22px" width="30" height="20" viewBox="1 2 22 14"><path d="M22.07 9.64c-.21-.8-1.04-1.28-1.84-1.06L14.92 10l-6.9-6.43-1.93.51 4.14 7.17-4.97 1.33-1.97-1.54-1.45.39 1.82 3.16.77 1.33 1.6-.43 5.31-1.42 4.35-1.16L21 11.49c.81-.23 1.28-1.05 1.07-1.85z" fill="#fff" transform="rotate(-12 12 10)"/></svg><div class="t" style="left:-60px;width:400px;text-align:center;top:25.7px;font-size:16px;color:#f0f0f0;">KSFO - Departure</div><div class="a" style="left:4px;top:50px;width:271px;height:2px;background:#262626;"></div><div class="a" style="left:4px;top:52px;width:271px;height:19px;background:#393939;"></div><div class="tab on" style="left:6px;top:52px;width:45px;height:18px;font-size:9px;">Weather</div><div class="tab" style="left:53px;top:52px;width:54px;height:18px;font-size:9px;">Procedures</div><div class="tab" style="left:109px;top:52px;width:61px;height:18px;font-size:9px;">Performance</div><div class="a" style="left:4px;top:70px;width:271px;height:2px;background:#262626;"></div><div class="a" style="left:4px;top:72px;width:271px;height:326px;background:#3c3c3c;"></div><div class="tab on" style="left:6px;top:80px;width:50px;height:17px;font-size:9px;justify-content:flex-start;padding-left:6px">METAR</div><div class="tab" style="left:58px;top:80px;width:50px;height:17px;font-size:9px;justify-content:flex-start;padding-left:6px">TAF</div><div class="a" style="left:4px;top:97px;width:271px;height:1px;background:#2c2c2c;"></div><div class="a" style="left:6px;top:98px;width:267px;height:1px;background:#383838;"></div><div class="t" style="left:8px;top:101.4px;font-size:8.3px;color:#5aa2e6;">Observation time:</div><div class="t" style="left:77px;top:101.4px;font-size:8.3px;color:#e2e2e2;">07:56z</div><div class="a" style="left:6px;top:112px;width:267px;height:1px;background:#383838;"></div><div class="t" style="left:8px;top:115.4px;font-size:8.3px;color:#5aa2e6;">Wind:</div><div class="t" style="left:77px;top:115.4px;font-size:8.3px;color:#e2e2e2;">200° at 9 KTS</div><div class="a" style="left:6px;top:126px;width:267px;height:1px;background:#383838;"></div><div class="t" style="left:8px;top:129.4px;font-size:8.3px;color:#5aa2e6;">Surface visibility:</div><div class="t" style="left:77px;top:129.4px;font-size:8.3px;color:#e2e2e2;">&gt; 10 km</div><div class="a" style="left:6px;top:140px;width:267px;height:1px;background:#383838;"></div><div class="t" style="left:8px;top:143.4px;font-size:8.3px;color:#5aa2e6;">Clouds:</div><div class="t" style="left:77px;top:143.4px;font-size:8.3px;color:#e2e2e2;">1700 ft FEW</div><div class="t" style="left:77px;top:153.9px;font-size:8.3px;color:#e2e2e2;">2000 ft OVC</div><div class="a" style="left:6px;top:164px;width:267px;height:1px;background:#383838;"></div><div class="t" style="left:8px;top:167.4px;font-size:8.3px;color:#5aa2e6;">TEMP / DEW:</div><div class="t" style="left:77px;top:167.4px;font-size:8.3px;color:#e2e2e2;">14°C&nbsp; / &nbsp;9°C&nbsp;&nbsp;&nbsp; (RH = 71.9%)</div><div class="a" style="left:6px;top:178px;width:267px;height:1px;background:#383838;"></div><div class="t" style="left:8px;top:181.4px;font-size:8.3px;color:#5aa2e6;">Altimeter:</div><div class="t" style="left:77px;top:181.4px;font-size:8.3px;color:#e2e2e2;">29.79 inHg&nbsp;&nbsp;&nbsp; (1009 hPa)</div><div class="a" style="left:6px;top:192px;width:267px;height:1px;background:#383838;"></div><div class="t" style="left:8px;top:195.4px;font-size:8.3px;color:#5aa2e6;">Flight COND:</div><div class="t" style="left:77px;top:195.4px;font-size:8.3px;color:#e2e2e2;"><span style="color:#3a7ad0">MVMC</span></div><div class="a" style="left:6px;top:206px;width:267px;height:1px;background:#383838;"></div><div class="t" style="left:8px;top:209.4px;font-size:8.3px;color:#5aa2e6;">Remarks:</div><div class="t" style="left:77px;top:209.4px;font-size:8.3px;color:#e2e2e2;">Automated weather observation station with</div><div class="t" style="left:77px;top:219.9px;font-size:8.3px;color:#e2e2e2;">precipitation discriminator</div><div class="a" style="left:6px;top:289px;width:267px;height:14px;background:#353535;"></div><div class="t" style="left:8px;top:291.6px;font-size:8px;color:#d0d0d0;">Ident</div><div class="t" style="left:37px;top:291.6px;font-size:8px;color:#d0d0d0;">Length</div><div class="t" style="left:72px;top:291.6px;font-size:8px;color:#d0d0d0;">LS</div><div class="t" style="left:93px;top:291.6px;font-size:8px;color:#d0d0d0;">X-Wind</div><div class="t" style="left:130px;top:291.6px;font-size:8px;color:#d0d0d0;">T/H-Wind</div><div class="t" style="left:177px;top:291.6px;font-size:8px;color:#d0d0d0;">Remarks</div><div class="a" style="left:0;top:303px;width:279px;height:95px;overflow:hidden"><div class="t" style="left:8px;top:1.3px;font-size:8.5px;color:#e0e0e0;">01L</div><div class="t" style="left:37px;top:1.3px;font-size:8.5px;color:#e0e0e0;">2288m</div><div class="t" style="left:72px;top:1.3px;font-size:8.5px;color:#e0e0e0;"></div><div class="t" style="left:93px;top:1.3px;font-size:8.5px;color:#e0e0e0;">1 KTS R</div><div class="t" style="left:130px;top:1.3px;font-size:8.5px;color:#e0e0e0;">9 KTS T</div><div class="t" style="left:177px;top:1.3px;font-size:8.5px;color:#e8d020;">Verify</div><div class="t" style="left:8px;top:14.3px;font-size:8.5px;color:#e0e0e0;">19R</div><div class="t" style="left:37px;top:14.3px;font-size:8.5px;color:#e0e0e0;">2288m</div><div class="t" style="left:72px;top:14.3px;font-size:8.5px;color:#e0e0e0;"></div><div class="t" style="left:93px;top:14.3px;font-size:8.5px;color:#e0e0e0;">1 KTS L</div><div class="t" style="left:130px;top:14.3px;font-size:8.5px;color:#e0e0e0;">9 KTS H</div><div class="t" style="left:177px;top:14.3px;font-size:8.5px;color:#2cb82c;">Takeoff / Landing</div><div class="t" style="left:8px;top:27.3px;font-size:8.5px;color:#e0e0e0;">01R</div><div class="t" style="left:37px;top:27.3px;font-size:8.5px;color:#e0e0e0;">2638m</div><div class="t" style="left:72px;top:27.3px;font-size:8.5px;color:#e0e0e0;">ILS</div><div class="t" style="left:93px;top:27.3px;font-size:8.5px;color:#e0e0e0;">1 KTS R</div><div class="t" style="left:130px;top:27.3px;font-size:8.5px;color:#e0e0e0;">9 KTS T</div><div class="t" style="left:177px;top:27.3px;font-size:8.5px;color:#e8d020;">Verify</div><div class="t" style="left:8px;top:40.3px;font-size:8.5px;color:#e0e0e0;">19L</div><div class="t" style="left:37px;top:40.3px;font-size:8.5px;color:#e0e0e0;">2638m</div><div class="t" style="left:72px;top:40.3px;font-size:8.5px;color:#e0e0e0;">ILS</div><div class="t" style="left:93px;top:40.3px;font-size:8.5px;color:#e0e0e0;">1 KTS L</div><div class="t" style="left:130px;top:40.3px;font-size:8.5px;color:#e0e0e0;">9 KTS H</div><div class="t" style="left:177px;top:40.3px;font-size:8.5px;color:#2cb82c;">Takeoff / Landing</div><div class="t" style="left:8px;top:53.3px;font-size:8.5px;color:#e0e0e0;">10L</div><div class="t" style="left:37px;top:53.3px;font-size:8.5px;color:#e0e0e0;">3615m</div><div class="t" style="left:72px;top:53.3px;font-size:8.5px;color:#e0e0e0;">ILS</div><div class="t" style="left:93px;top:53.3px;font-size:8.5px;color:#e0e0e0;">9 KTS R</div><div class="t" style="left:130px;top:53.3px;font-size:8.5px;color:#e0e0e0;">1 KTS H</div><div class="t" style="left:177px;top:53.3px;font-size:8.5px;color:#2cb82c;">Takeoff / Landing</div><div class="t" style="left:8px;top:66.3px;font-size:8.5px;color:#e0e0e0;">28R</div><div class="t" style="left:37px;top:66.3px;font-size:8.5px;color:#e0e0e0;">3615m</div><div class="t" style="left:72px;top:66.3px;font-size:8.5px;color:#e0e0e0;">ILS</div><div class="t" style="left:93px;top:66.3px;font-size:8.5px;color:#e0e0e0;">9 KTS L</div><div class="t" style="left:130px;top:66.3px;font-size:8.5px;color:#e0e0e0;">1 KTS T</div><div class="t" style="left:177px;top:66.3px;font-size:8.5px;color:#2cb82c;">Takeoff / Landing</div><div class="t" style="left:8px;top:79.3px;font-size:8.5px;color:#e0e0e0;">10R</div><div class="t" style="left:37px;top:79.3px;font-size:8.5px;color:#e0e0e0;">3229m</div><div class="t" style="left:72px;top:79.3px;font-size:8.5px;color:#e0e0e0;">ILS</div><div class="t" style="left:93px;top:79.3px;font-size:8.5px;color:#e0e0e0;">9 KTS R</div><div class="t" style="left:130px;top:79.3px;font-size:8.5px;color:#e0e0e0;">1 KTS H</div><div class="t" style="left:177px;top:79.3px;font-size:8.5px;color:#2cb82c;">Takeoff / Landing</div><div class="t" style="left:8px;top:92.3px;font-size:8.5px;color:#e0e0e0;">28L</div><div class="t" style="left:37px;top:92.3px;font-size:8.5px;color:#e0e0e0;">3229m</div><div class="t" style="left:72px;top:92.3px;font-size:8.5px;color:#e0e0e0;">ILS</div><div class="t" style="left:93px;top:92.3px;font-size:8.5px;color:#e0e0e0;">9 KTS L</div><div class="t" style="left:130px;top:92.3px;font-size:8.5px;color:#e0e0e0;">1 KTS T</div><div class="t" style="left:177px;top:92.3px;font-size:8.5px;color:#2cb82c;">Takeoff / Landing</div></div><div class="a" style="left:4px;top:398px;width:271px;height:24px;background:#2e2e2e;"></div><div class="btn " style="left:8px;top:401px;width:49px;height:19px;font-size:9px;">Arrivals</div></div><div class="win" style="left:1224px;top:73px;width:279px;height:427px;background:#1b1b1b"><div class="a" style="left:0px;top:0px;width:279px;height:18px;background:linear-gradient(#232323,#1b1b1b);"></div><svg class="a" style="left:6px;top:3px" width="10" height="12" viewBox="0 0 10 12"><path d="M3 1 L9 1 L7 11 L1 11 Z" fill="#6aa6e8"/><path d="M4 2 L8 2 L7 6 L3 6Z" fill="#bfe0ff"/></svg><div class="t" style="left:20px;top:4.0px;font-size:10px;color:#d8d8d8;">DEP / ARR</div><div class="a" style="left:259px;top:2px;width:14px;height:13px;background:#b01010"></div><svg class="a" style="left:259px;top:2px" width="14" height="13"><path d="M3.5 3 L10.5 10 M10.5 3 L3.5 10" stroke="#dcdcdc" stroke-width="2.2"/></svg><svg class="a" style="left:244px;top:3px" width="12" height="11"><rect x="1.5" y="1.5" width="9" height="8" fill="none" stroke="#dcdcdc" stroke-width="1.5"/><rect x="1.5" y="1.5" width="9" height="2.5" fill="#dcdcdc"/></svg><svg class="a" style="left:229px;top:3px" width="11" height="11"><rect x="1" y="6" width="9" height="2.5" fill="#dcdcdc"/></svg><div class="a" style="left:4px;top:18px;width:271px;height:31px;background:#3a3a3a;"></div><svg class="a" style="left:10px;top:22px" width="30" height="20" viewBox="1 2 22 14"><path d="M22.07 9.64c-.21-.8-1.04-1.28-1.84-1.06L14.92 10l-6.9-6.43-1.93.51 4.14 7.17-4.97 1.33-1.97-1.54-1.45.39 1.82 3.16.77 1.33 1.6-.43 5.31-1.42 4.35-1.16L21 11.49c.81-.23 1.28-1.05 1.07-1.85z" fill="#fff" transform="rotate(-12 12 10)"/></svg><div class="t" style="left:-59px;width:400px;text-align:center;top:26.2px;font-size:16px;color:#f0f0f0;">KSFO - Departure</div><div class="a" style="left:4px;top:49px;width:271px;height:2px;background:#262626;"></div><div class="a" style="left:4px;top:51px;width:271px;height:20px;background:#393939;"></div><div class="tab on" style="left:6px;top:52px;width:46px;height:18px;font-size:9px;">Weather</div><div class="tab" style="left:54px;top:52px;width:54px;height:18px;font-size:9px;">Procedures</div><div class="tab" style="left:110px;top:52px;width:62px;height:18px;font-size:9px;">Performance</div><div class="a" style="left:4px;top:70px;width:271px;height:2px;background:#262626;"></div><div class="a" style="left:4px;top:72px;width:271px;height:326px;background:#3c3c3c;"></div><div class="tab" style="left:7px;top:80px;width:50px;height:18px;font-size:9px;justify-content:flex-start;padding-left:6px">METAR</div><div class="tab on" style="left:58px;top:80px;width:52px;height:18px;font-size:9px;justify-content:flex-start;padding-left:6px">TAF</div><div class="a" style="left:4px;top:98px;width:271px;height:1px;background:#2c2c2c;"></div><div class="t" style="left:-339px;width:400px;text-align:right;top:101.4px;font-size:8.3px;color:#5aa2e6;">Dissemination</div><div class="t" style="left:79px;top:101.4px;font-size:8.3px;color:#e2e2e2;">06:59z</div><div class="t" style="left:-339px;width:400px;text-align:right;top:112.4px;font-size:8.3px;color:#5aa2e6;">Duration</div><div class="t" style="left:79px;top:112.4px;font-size:8.3px;color:#e2e2e2;">29 hrs</div><div class="t" style="left:-122px;width:400px;text-align:center;top:128.9px;font-size:7.5px;color:#d8d8d8;">07:00z</div><div class="t" style="left:-83px;width:400px;text-align:center;top:128.9px;font-size:7.5px;color:#d8d8d8;">13:00z</div><div class="t" style="left:-46px;width:400px;text-align:center;top:128.9px;font-size:7.5px;color:#d8d8d8;">19:00z</div><div class="t" style="left:-8px;width:400px;text-align:center;top:128.9px;font-size:7.5px;color:#d8d8d8;">01:00z</div><div class="t" style="left:30px;width:400px;text-align:center;top:128.9px;font-size:7.5px;color:#d8d8d8;">07:00z</div><div class="t" style="left:62px;width:400px;text-align:center;top:128.9px;font-size:7.5px;color:#d8d8d8;">12:00z</div><svg class="a" style="left:71px;top:139px" width="200" height="90" viewBox="1295 212 200 90"><line x1="1302.5" y1="213" x2="1302.5" y2="221" stroke="#cfcfcf" stroke-width="1.2"/><line x1="1308.8" y1="214" x2="1308.8" y2="218" stroke="#cfcfcf" stroke-width="1"/><line x1="1315.2" y1="214" x2="1315.2" y2="218" stroke="#cfcfcf" stroke-width="1"/><line x1="1321.5" y1="214" x2="1321.5" y2="218" stroke="#cfcfcf" stroke-width="1"/><line x1="1327.8" y1="214" x2="1327.8" y2="218" stroke="#cfcfcf" stroke-width="1"/><line x1="1334.1" y1="214" x2="1334.1" y2="218" stroke="#cfcfcf" stroke-width="1"/><line x1="1340.5" y1="213" x2="1340.5" y2="221" stroke="#cfcfcf" stroke-width="1.2"/><line x1="1346.8" y1="214" x2="1346.8" y2="218" stroke="#cfcfcf" stroke-width="1"/><line x1="1353.1" y1="214" x2="1353.1" y2="218" stroke="#cfcfcf" stroke-width="1"/><line x1="1359.4" y1="214" x2="1359.4" y2="218" stroke="#cfcfcf" stroke-width="1"/><line x1="1365.8" y1="214" x2="1365.8" y2="218" stroke="#cfcfcf" stroke-width="1"/><line x1="1372.1" y1="214" x2="1372.1" y2="218" stroke="#cfcfcf" stroke-width="1"/><line x1="1378.4" y1="213" x2="1378.4" y2="221" stroke="#cfcfcf" stroke-width="1.2"/><line x1="1384.8" y1="214" x2="1384.8" y2="218" stroke="#cfcfcf" stroke-width="1"/><line x1="1391.1" y1="214" x2="1391.1" y2="218" stroke="#cfcfcf" stroke-width="1"/><line x1="1397.4" y1="214" x2="1397.4" y2="218" stroke="#cfcfcf" stroke-width="1"/><line x1="1403.7" y1="214" x2="1403.7" y2="218" stroke="#cfcfcf" stroke-width="1"/><line x1="1410.1" y1="214" x2="1410.1" y2="218" stroke="#cfcfcf" stroke-width="1"/><line x1="1416.4" y1="213" x2="1416.4" y2="221" stroke="#cfcfcf" stroke-width="1.2"/><line x1="1422.7" y1="214" x2="1422.7" y2="218" stroke="#cfcfcf" stroke-width="1"/><line x1="1429.1" y1="214" x2="1429.1" y2="218" stroke="#cfcfcf" stroke-width="1"/><line x1="1435.4" y1="214" x2="1435.4" y2="218" stroke="#cfcfcf" stroke-width="1"/><line x1="1441.7" y1="214" x2="1441.7" y2="218" stroke="#cfcfcf" stroke-width="1"/><line x1="1448.0" y1="214" x2="1448.0" y2="218" stroke="#cfcfcf" stroke-width="1"/><line x1="1454.4" y1="213" x2="1454.4" y2="221" stroke="#cfcfcf" stroke-width="1.2"/><line x1="1460.7" y1="214" x2="1460.7" y2="218" stroke="#cfcfcf" stroke-width="1"/><line x1="1467.0" y1="214" x2="1467.0" y2="218" stroke="#cfcfcf" stroke-width="1"/><line x1="1473.3" y1="214" x2="1473.3" y2="218" stroke="#cfcfcf" stroke-width="1"/><line x1="1479.7" y1="214" x2="1479.7" y2="218" stroke="#cfcfcf" stroke-width="1"/><line x1="1486.0" y1="213" x2="1486.0" y2="221" stroke="#cfcfcf" stroke-width="1.2"/><defs><pattern id="hm" width="5" height="5" patternUnits="userSpaceOnUse" patternTransform="rotate(45)"><line x1="0" y1="0" x2="0" y2="5" stroke="#c060c0" stroke-width="2"/></pattern><pattern id="ho" width="5" height="5" patternUnits="userSpaceOnUse" patternTransform="rotate(45)"><line x1="0" y1="0" x2="0" y2="5" stroke="#e09020" stroke-width="2"/></pattern></defs><rect x="1302" y="222" width="20" height="9" fill="url(#ho)" stroke="#e09020" stroke-width="1.2"/><rect x="1321" y="233" width="39" height="9" fill="url(#hm)" stroke="#c060c0" stroke-width="1.2"/><rect x="1359" y="244" width="27" height="9" fill="url(#hm)" stroke="#c060c0" stroke-width="1.2"/><rect x="1385" y="255" width="13" height="9" fill="url(#hm)" stroke="#c060c0" stroke-width="1.2"/><rect x="1397" y="266" width="39" height="9" fill="url(#hm)" stroke="#c060c0" stroke-width="1.2"/><rect x="1435" y="277" width="26" height="9" fill="url(#hm)" stroke="#c060c0" stroke-width="1.2"/><rect x="1460" y="288" width="26" height="9" fill="url(#hm)" stroke="#c060c0" stroke-width="1.2"/></svg><div class="t" style="left:-339px;width:400px;text-align:right;top:148.4px;font-size:8.3px;color:#5aa2e6;">Forecast</div><div class="t" style="left:-339px;width:400px;text-align:right;top:159.4px;font-size:8.3px;color:#5aa2e6;">FROM</div><div class="t" style="left:-339px;width:400px;text-align:right;top:170.4px;font-size:8.3px;color:#5aa2e6;">FROM</div><div class="t" style="left:-339px;width:400px;text-align:right;top:181.4px;font-size:8.3px;color:#5aa2e6;">FROM</div><div class="t" style="left:-339px;width:400px;text-align:right;top:192.4px;font-size:8.3px;color:#5aa2e6;">FROM</div><div class="t" style="left:-339px;width:400px;text-align:right;top:203.4px;font-size:8.3px;color:#5aa2e6;">FROM</div><div class="t" style="left:-339px;width:400px;text-align:right;top:214.4px;font-size:8.3px;color:#5aa2e6;">FROM</div><div class="a" style="left:6px;top:229px;width:267px;height:17px;background:#4a4a4a;"></div><div class="t" style="left:9px;top:232.8px;font-size:8.5px;color:#e0e0e0;">TAF Details</div><div class="a" style="left:6px;top:246px;width:267px;height:152px;background:#383838;"></div><div class="t" style="left:8px;top:248.4px;font-size:8.3px;color:#5aa2e6;">From/Until:</div><div class="t" style="left:73px;top:248.4px;font-size:8.3px;color:#e2e2e2;">2018-06-17 07:00z 2018-06-18 12:00z</div><div class="t" style="left:8px;top:262.4px;font-size:8.3px;color:#5aa2e6;">Wind:</div><div class="t" style="left:73px;top:262.4px;font-size:8.3px;color:#e2e2e2;">230° at 10 KTS</div><div class="t" style="left:8px;top:276.4px;font-size:8.3px;color:#5aa2e6;">Surface visibility:</div><div class="t" style="left:73px;top:276.4px;font-size:8.3px;color:#e2e2e2;">&gt; 10 km</div><div class="t" style="left:8px;top:290.4px;font-size:8.3px;color:#5aa2e6;">Clouds:</div><div class="t" style="left:73px;top:290.4px;font-size:8.3px;color:#e2e2e2;">1400 ft FEW</div><div class="t" style="left:73px;top:301.4px;font-size:8.3px;color:#e2e2e2;">1700 ft FEW</div><div class="t" style="left:8px;top:314.4px;font-size:8.3px;color:#e07820;">1) TEMPO</div><div class="t" style="left:8px;top:328.4px;font-size:8.3px;color:#5aa2e6;">From/Until:</div><div class="t" style="left:73px;top:328.4px;font-size:8.3px;color:#e2e2e2;">2018-06-17 07:00z 2018-06-17 10:00z</div><div class="t" style="left:8px;top:342.4px;font-size:8.3px;color:#5aa2e6;">Clouds:</div><div class="t" style="left:73px;top:342.4px;font-size:8.3px;color:#e2e2e2;">1300 ft BKN</div><div class="t" style="left:8px;top:357.4px;font-size:8.3px;color:#c050c0;">2) FROM</div><div class="t" style="left:8px;top:371.4px;font-size:8.3px;color:#5aa2e6;">From/Until:</div><div class="t" style="left:73px;top:371.4px;font-size:8.3px;color:#e2e2e2;">2018-06-17 10:00z</div><div class="t" style="left:8px;top:385.4px;font-size:8.3px;color:#5aa2e6;">Wind:</div><div class="t" style="left:73px;top:385.4px;font-size:8.3px;color:#e2e2e2;">vrb 4 KTS</div><div class="a" style="left:266px;top:248px;width:7px;height:149px;background:#2e2e2e;"></div><div class="a" style="left:267px;top:259px;width:5px;height:35px;background:#4a4a4a;"></div><div class="t" style="left:267px;top:249.2px;font-size:5px;color:#aaa;">▲</div><div class="t" style="left:267px;top:389.2px;font-size:5px;color:#aaa;">▼</div><div class="a" style="left:4px;top:398px;width:271px;height:25px;background:#2e2e2e;"></div><div class="btn " style="left:8px;top:402px;width:49px;height:19px;font-size:9px;">Arrivals</div></div><div class="win" style="left:1540px;top:23px;width:335px;height:456px;background:#1b1b1b"><div class="a" style="left:0px;top:0px;width:335px;height:18px;background:linear-gradient(#232323,#1b1b1b);"></div><svg class="a" style="left:6px;top:3px" width="10" height="12" viewBox="0 0 10 12"><path d="M3 1 L9 1 L7 11 L1 11 Z" fill="#6aa6e8"/><path d="M4 2 L8 2 L7 6 L3 6Z" fill="#bfe0ff"/></svg><div class="t" style="left:20px;top:4.0px;font-size:10px;color:#d8d8d8;">Checklist</div><div class="a" style="left:315px;top:2px;width:14px;height:13px;background:#b01010"></div><svg class="a" style="left:315px;top:2px" width="14" height="13"><path d="M3.5 3 L10.5 10 M10.5 3 L3.5 10" stroke="#dcdcdc" stroke-width="2.2"/></svg><svg class="a" style="left:301px;top:3px" width="11" height="11"><rect x="1" y="6" width="9" height="2.5" fill="#dcdcdc"/></svg><div class="a" style="left:4px;top:18px;width:327px;height:20px;background:#333333;"></div><div class="t" style="left:-30px;width:400px;text-align:center;top:21.9px;font-size:12px;color:#e8e8e8;">A320-200</div><div class="a" style="left:4px;top:38px;width:327px;height:19px;background:#464646;"></div><div class="tab on" style="left:5px;top:38px;width:47px;height:19px;font-size:9px;">Normals</div><div class="tab" style="left:52px;top:38px;width:55px;height:19px;font-size:9px;color:#777;background:#3c3c3c">Abnormals</div><div class="a" style="left:4px;top:57px;width:327px;height:371px;background:#383838;"></div><div class="t" style="left:-33px;width:400px;text-align:center;top:61.7px;font-size:11.5px;color:#e6e6e6;">BEFORE START</div><div class="t" style="left:46px;top:86.5px;font-size:10px;color:#a6d84a;letter-spacing:-0.1px">Cockpit Preparation</div><div class="t" style="left:-151px;width:400px;text-align:right;top:86.5px;font-size:10px;color:#a6d84a;letter-spacing:-0.1px">COMPLETED</div><div class="a" style="left:140px;top:95px;width:50px;height:0;border-top:1.5px dotted #a6d84a;opacity:0.8"></div><div class="a" style="left:258px;top:83px;width:68px;height:17px;border:1.5px solid #8c9c38;display:flex;align-items:center;justify-content:center;font-size:8.5px;color:#c4d848;white-space:nowrap">DONE</div><div class="t" style="left:46px;top:118.5px;font-size:10px;color:#a6d84a;letter-spacing:-0.1px">Signs</div><div class="t" style="left:-151px;width:400px;text-align:right;top:118.5px;font-size:10px;color:#a6d84a;letter-spacing:-0.1px">ON / AUTO</div><div class="a" style="left:79px;top:127px;width:117px;height:0;border-top:1.5px dotted #a6d84a;opacity:0.8"></div><div class="a" style="left:258px;top:115px;width:68px;height:17px;border:1.5px solid #8c9c38;display:flex;align-items:center;justify-content:center;font-size:8.5px;color:#c4d848;white-space:nowrap">DONE</div><div class="t" style="left:46px;top:150.5px;font-size:10px;color:#a6d84a;letter-spacing:-0.1px">Fuel Quantity</div><div class="t" style="left:-151px;width:400px;text-align:right;top:150.5px;font-size:10px;color:#a6d84a;letter-spacing:-0.1px">KG / LBS</div><div class="a" style="left:113px;top:159px;width:95px;height:0;border-top:1.5px dotted #a6d84a;opacity:0.8"></div><div class="a" style="left:258px;top:147px;width:68px;height:17px;border:1.5px solid #8c9c38;display:flex;align-items:center;justify-content:center;font-size:8.5px;color:#c4d848;white-space:nowrap">DONE</div><div class="t" style="left:46px;top:182.5px;font-size:10px;color:#a6d84a;letter-spacing:-0.1px">TO Data</div><div class="t" style="left:-151px;width:400px;text-align:right;top:182.5px;font-size:10px;color:#a6d84a;letter-spacing:-0.1px">SET (V1),(V2),(FLEX)</div><div class="a" style="left:90px;top:191px;width:70px;height:0;border-top:1.5px dotted #a6d84a;opacity:0.8"></div><div class="a" style="left:258px;top:179px;width:68px;height:17px;border:1.5px solid #8c9c38;display:flex;align-items:center;justify-content:center;font-size:8.5px;color:#c4d848;white-space:nowrap">DONE</div><div class="t" style="left:46px;top:214.5px;font-size:10px;color:#a6d84a;letter-spacing:-0.1px">Baro REF</div><div class="t" style="left:-151px;width:400px;text-align:right;top:214.5px;font-size:10px;color:#a6d84a;letter-spacing:-0.1px">SET</div><div class="a" style="left:93px;top:223px;width:136px;height:0;border-top:1.5px dotted #a6d84a;opacity:0.8"></div><div class="a" style="left:258px;top:211px;width:68px;height:17px;border:1.5px solid #8c9c38;display:flex;align-items:center;justify-content:center;font-size:8.5px;color:#c4d848;white-space:nowrap">DONE</div><div class="t" style="left:46px;top:246.5px;font-size:10px;color:#f0c428;letter-spacing:-0.1px">Windows / Doors</div><div class="t" style="left:-151px;width:400px;text-align:right;top:246.5px;font-size:10px;color:#f0c428;letter-spacing:-0.1px">CLOSED</div><div class="a" style="left:130px;top:255px;width:79px;height:0;border-top:1.5px dotted #f0c428;opacity:0.8"></div><div class="a" style="left:258px;top:243px;width:68px;height:17px;border:1.5px solid #c8a828;display:flex;align-items:center;justify-content:center;font-size:8.5px;color:#f0c828;white-space:nowrap">SKIPPED</div><div class="t" style="left:46px;top:278.5px;font-size:10px;color:#a6d84a;letter-spacing:-0.1px">A/SKID &amp; N/W STRG</div><div class="t" style="left:-151px;width:400px;text-align:right;top:278.5px;font-size:10px;color:#a6d84a;letter-spacing:-0.1px">AS RQRD</div><div class="a" style="left:145px;top:287px;width:59px;height:0;border-top:1.5px dotted #a6d84a;opacity:0.8"></div><div class="a" style="left:258px;top:275px;width:68px;height:17px;border:1.5px solid #8c9c38;display:flex;align-items:center;justify-content:center;font-size:8.5px;color:#c4d848;white-space:nowrap">DONE</div><div class="t" style="left:46px;top:310.5px;font-size:10px;color:#f2f2f2;letter-spacing:-0.1px">Beacon</div><div class="t" style="left:-151px;width:400px;text-align:right;top:310.5px;font-size:10px;color:#f2f2f2;letter-spacing:-0.1px">ON</div><div class="a" style="left:86px;top:319px;width:145px;height:0;border-top:1.5px dotted #f2f2f2;opacity:0.8"></div><div class="a" style="left:258px;top:307px;width:68px;height:17px;border:1.5px solid #c8c8c8;display:flex;align-items:center;justify-content:center;font-size:8px;color:#ffffff;white-space:nowrap">Click when done</div><div class="t" style="left:46px;top:342.5px;font-size:10px;color:#767676;letter-spacing:-0.1px">THR Levers</div><div class="t" style="left:-151px;width:400px;text-align:right;top:342.5px;font-size:10px;color:#767676;letter-spacing:-0.1px">IDLE</div><div class="a" style="left:104px;top:351px;width:122px;height:0;border-top:1.5px dotted #767676;opacity:0.8"></div><div class="a" style="left:258px;top:339px;width:68px;height:17px;border:1.5px solid #5c5c5c;display:flex;align-items:center;justify-content:center;font-size:8px;color:#777777;white-space:nowrap">Click when done</div><div class="t" style="left:46px;top:373.5px;font-size:10px;color:#767676;letter-spacing:-0.1px">Parking Brake</div><div class="t" style="left:-151px;width:400px;text-align:right;top:373.5px;font-size:10px;color:#767676;letter-spacing:-0.1px">AS RQRD</div><div class="a" style="left:115px;top:382px;width:89px;height:0;border-top:1.5px dotted #767676;opacity:0.8"></div><div class="a" style="left:258px;top:370px;width:68px;height:17px;border:1.5px solid #5c5c5c;display:flex;align-items:center;justify-content:center;font-size:8px;color:#777777;white-space:nowrap">Click when done</div><div class="t" style="left:46px;top:405.5px;font-size:10px;color:#767676;letter-spacing:-0.1px">Mobile Devices</div><div class="t" style="left:-151px;width:400px;text-align:right;top:405.5px;font-size:10px;color:#767676;letter-spacing:-0.1px">OFF</div><div class="a" style="left:120px;top:414px;width:108px;height:0;border-top:1.5px dotted #767676;opacity:0.8"></div><div class="a" style="left:258px;top:402px;width:68px;height:17px;border:1.5px solid #5c5c5c;display:flex;align-items:center;justify-content:center;font-size:8px;color:#777777;white-space:nowrap">Click when done</div><svg class="a" style="left:315px;top:417px" width="11" height="10"><rect x="0.5" y="0.5" width="10" height="9" fill="none" stroke="#3aa03a"/><path d="M2 2.5 L9 2.5 L5.5 8Z" fill="#3acc3a"/></svg><svg class="a" style="left:294px;top:317px" width="10" height="14" viewBox="0 0 10 14"><path d="M3 1 L4.5 1 L4.5 6 L8 7 Q9 8 8.5 11 L7 13 L3.5 13 L1 9 L2 8 L3 9Z" fill="#fff" stroke="#111" stroke-width="0.8"/></svg><div class="a" style="left:4px;top:428px;width:327px;height:24px;background:#2f2f2f;"></div><div class="btn " style="left:7px;top:432px;width:50px;height:19px;font-size:9px;">Contents</div><div class="btn " style="left:89px;top:432px;width:50px;height:19px;font-size:9px;">Comments</div><div class="btn " style="left:170px;top:432px;width:50px;height:19px;font-size:9px;">Reset</div><div class="btn " style="left:225px;top:432px;width:49px;height:19px;font-size:9px;color:#5c5c5c">&lt; Back</div><div class="btn " style="left:279px;top:432px;width:49px;height:19px;font-size:9px;">Next &gt;</div></div><div class="a" style="left:1874px;top:171px;width:2px;height:308px;background:#c8c8c8;"></div><div class="a" style="left:1540px;top:477px;width:336px;height:2px;background:#e0e0e0;"></div></body></html>
